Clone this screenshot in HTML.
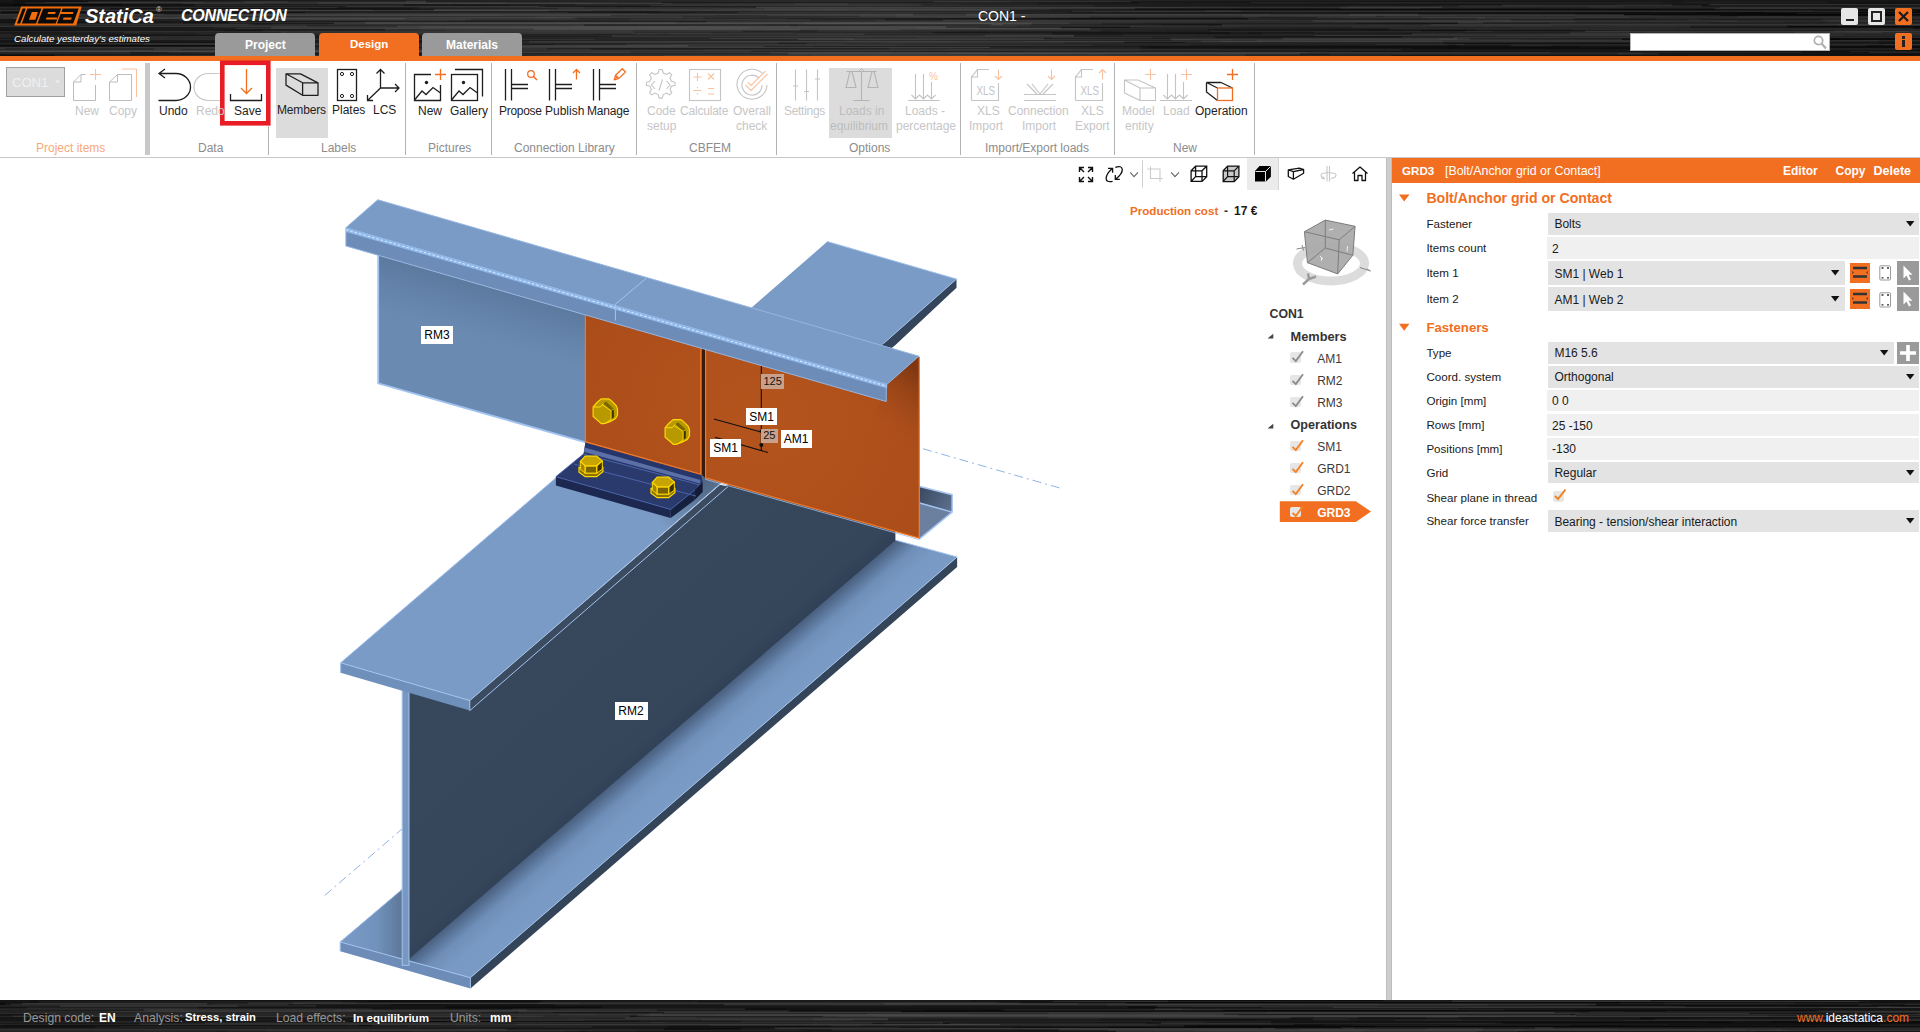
<!DOCTYPE html>
<html><head><meta charset="utf-8">
<style>
*{margin:0;padding:0;box-sizing:border-box}
html,body{width:1920px;height:1032px;overflow:hidden;background:#fff;font-family:"Liberation Sans",sans-serif;position:relative}
.a{position:absolute}
.hdr{left:0;top:0;width:1920px;height:56px;background:#262626;
 background-image:repeating-linear-gradient(180deg,rgba(255,255,255,0.05) 0px,rgba(0,0,0,0.25) 2px,rgba(255,255,255,0.07) 3px,rgba(0,0,0,0.15) 5px,rgba(255,255,255,0.03) 7px);}
.obar{left:0;top:56px;width:1920px;height:5px;background:#f26e21}
.rib{left:0;top:61px;width:1920px;height:96px;background:#fff}
.ribline{left:0;top:157px;width:1920px;height:1px;background:#c8c8c8}
.t{position:absolute;white-space:nowrap;font-size:13px;color:#1e1e1e;line-height:1}
.dis{color:#c6c6c6}
.grp{position:absolute;white-space:nowrap;font-size:13px;color:#8c8c8c;line-height:1}
.sep{position:absolute;width:1px;background:#c8c8c8}
.lbl{position:absolute;background:#fff;font-size:12px;line-height:1;color:#000;display:flex;align-items:center;justify-content:center;white-space:nowrap}
.lbl.tan{background:#c9a18a;font-size:11px;color:#111}
.status{left:0;top:1000px;width:1920px;height:32px;background:#1e1e1e;
 background-image:repeating-linear-gradient(180deg,rgba(255,255,255,0.05) 0px,rgba(0,0,0,0.25) 2px,rgba(255,255,255,0.07) 3px,rgba(0,0,0,0.15) 5px,rgba(255,255,255,0.03) 7px);}
</style></head><body>
<div class="a hdr"><svg class="a" style="left:0;top:0" width="1920" height="56"><rect width="1920" height="56" fill="#161616"/><rect x="943" y="25.3" width="843" height="1" fill="#4c4c4c" opacity="0.34"/><rect x="836" y="10.3" width="622" height="1.5" fill="#000" opacity="0.16"/><rect x="896" y="7.9" width="818" height="2" fill="#000" opacity="0.38"/><rect x="1152" y="54.0" width="612" height="1" fill="#4c4c4c" opacity="0.13"/><rect x="122" y="3.3" width="331" height="2" fill="#4c4c4c" opacity="0.32"/><rect x="134" y="33.1" width="325" height="1" fill="#4c4c4c" opacity="0.12"/><rect x="318" y="25.6" width="898" height="1.5" fill="#000" opacity="0.48"/><rect x="210" y="17.7" width="367" height="2" fill="#4c4c4c" opacity="0.45"/><rect x="346" y="6.0" width="200" height="1" fill="#4c4c4c" opacity="0.41"/><rect x="1721" y="11.7" width="502" height="1" fill="#000" opacity="0.29"/><rect x="141" y="31.7" width="656" height="1" fill="#4c4c4c" opacity="0.25"/><rect x="1383" y="54.0" width="238" height="1" fill="#4c4c4c" opacity="0.16"/><rect x="781" y="26.0" width="662" height="1" fill="#4c4c4c" opacity="0.34"/><rect x="552" y="23.5" width="446" height="1.5" fill="#000" opacity="0.12"/><rect x="-256" y="55.9" width="290" height="1" fill="#000" opacity="0.38"/><rect x="25" y="2.4" width="481" height="1.5" fill="#4c4c4c" opacity="0.38"/><rect x="-135" y="21.6" width="307" height="1.5" fill="#000" opacity="0.13"/><rect x="706" y="20.8" width="869" height="2" fill="#4c4c4c" opacity="0.37"/><rect x="42" y="10.2" width="831" height="1" fill="#000" opacity="0.23"/><rect x="1096" y="8.9" width="565" height="2" fill="#000" opacity="0.29"/><rect x="636" y="33.8" width="228" height="1" fill="#4c4c4c" opacity="0.53"/><rect x="569" y="41.4" width="466" height="1" fill="#000" opacity="0.33"/><rect x="1869" y="52.0" width="245" height="1" fill="#4c4c4c" opacity="0.40"/><rect x="1737" y="15.7" width="303" height="2" fill="#4c4c4c" opacity="0.24"/><rect x="-197" y="13.9" width="361" height="1" fill="#4c4c4c" opacity="0.54"/><rect x="1678" y="20.3" width="885" height="1" fill="#000" opacity="0.42"/><rect x="1750" y="33.0" width="506" height="1" fill="#4c4c4c" opacity="0.25"/><rect x="1112" y="1.2" width="512" height="1" fill="#000" opacity="0.26"/><rect x="912" y="4.2" width="703" height="1" fill="#000" opacity="0.44"/><rect x="1731" y="44.4" width="414" height="2" fill="#000" opacity="0.51"/><rect x="-233" y="52.9" width="525" height="2" fill="#4c4c4c" opacity="0.40"/><rect x="1052" y="32.6" width="210" height="2" fill="#000" opacity="0.55"/><rect x="562" y="40.8" width="701" height="1" fill="#4c4c4c" opacity="0.31"/><rect x="842" y="29.0" width="383" height="1" fill="#4c4c4c" opacity="0.13"/><rect x="1064" y="27.8" width="840" height="1.5" fill="#4c4c4c" opacity="0.12"/><rect x="1058" y="8.0" width="539" height="2" fill="#000" opacity="0.27"/><rect x="236" y="27.9" width="454" height="1" fill="#4c4c4c" opacity="0.39"/><rect x="553" y="49.3" width="587" height="2" fill="#4c4c4c" opacity="0.18"/><rect x="1688" y="19.6" width="180" height="1" fill="#4c4c4c" opacity="0.54"/><rect x="746" y="6.3" width="844" height="2" fill="#000" opacity="0.28"/><rect x="1290" y="37.6" width="781" height="1" fill="#000" opacity="0.26"/><rect x="1049" y="15.6" width="659" height="1" fill="#4c4c4c" opacity="0.27"/><rect x="600" y="35.9" width="292" height="1" fill="#000" opacity="0.23"/><rect x="1885" y="44.6" width="236" height="1.5" fill="#4c4c4c" opacity="0.35"/><rect x="1220" y="53.7" width="300" height="1" fill="#4c4c4c" opacity="0.20"/><rect x="887" y="42.3" width="177" height="1" fill="#4c4c4c" opacity="0.45"/><rect x="1458" y="22.0" width="830" height="2" fill="#4c4c4c" opacity="0.52"/><rect x="707" y="7.3" width="619" height="1.5" fill="#000" opacity="0.28"/><rect x="1146" y="26.0" width="304" height="1" fill="#000" opacity="0.47"/><rect x="1698" y="11.9" width="885" height="1.5" fill="#000" opacity="0.35"/><rect x="1295" y="14.7" width="162" height="1.5" fill="#4c4c4c" opacity="0.14"/><rect x="1405" y="30.8" width="516" height="1" fill="#4c4c4c" opacity="0.47"/><rect x="-222" y="24.0" width="550" height="2" fill="#000" opacity="0.51"/><rect x="847" y="8.3" width="693" height="2" fill="#000" opacity="0.42"/><rect x="1230" y="32.4" width="718" height="1" fill="#4c4c4c" opacity="0.36"/><rect x="1573" y="29.3" width="570" height="1" fill="#4c4c4c" opacity="0.28"/><rect x="13" y="17.0" width="559" height="2" fill="#4c4c4c" opacity="0.33"/><rect x="817" y="30.0" width="604" height="2" fill="#4c4c4c" opacity="0.54"/><rect x="1896" y="30.5" width="241" height="2" fill="#4c4c4c" opacity="0.19"/><rect x="1824" y="23.2" width="843" height="1" fill="#4c4c4c" opacity="0.32"/><rect x="1700" y="19.0" width="852" height="1" fill="#000" opacity="0.35"/><rect x="1072" y="10.7" width="844" height="1" fill="#4c4c4c" opacity="0.46"/><rect x="45" y="2.0" width="159" height="1" fill="#4c4c4c" opacity="0.43"/><rect x="-67" y="34.7" width="698" height="1.5" fill="#4c4c4c" opacity="0.34"/><rect x="1257" y="40.2" width="809" height="1" fill="#4c4c4c" opacity="0.39"/><rect x="1618" y="30.1" width="551" height="1" fill="#4c4c4c" opacity="0.21"/><rect x="1345" y="13.0" width="758" height="1.5" fill="#000" opacity="0.26"/><rect x="132" y="49.9" width="734" height="1" fill="#4c4c4c" opacity="0.16"/><rect x="-104" y="7.4" width="441" height="1" fill="#4c4c4c" opacity="0.52"/><rect x="1094" y="11.2" width="749" height="1.5" fill="#4c4c4c" opacity="0.37"/><rect x="1850" y="51.0" width="237" height="1" fill="#4c4c4c" opacity="0.45"/><rect x="770" y="45.0" width="168" height="2" fill="#000" opacity="0.38"/><rect x="110" y="8.2" width="303" height="1" fill="#000" opacity="0.55"/><rect x="-2" y="32.5" width="661" height="2" fill="#4c4c4c" opacity="0.16"/><rect x="844" y="26.1" width="473" height="1" fill="#000" opacity="0.13"/><rect x="102" y="47.3" width="490" height="1" fill="#000" opacity="0.29"/><rect x="-90" y="33.9" width="744" height="2" fill="#4c4c4c" opacity="0.16"/><rect x="124" y="31.9" width="588" height="1.5" fill="#4c4c4c" opacity="0.45"/><rect x="1353" y="51.0" width="733" height="1.5" fill="#000" opacity="0.29"/><rect x="1242" y="49.3" width="725" height="1" fill="#000" opacity="0.29"/><rect x="459" y="4.0" width="502" height="1" fill="#4c4c4c" opacity="0.27"/><rect x="1797" y="13.0" width="650" height="1" fill="#4c4c4c" opacity="0.40"/><rect x="565" y="29.9" width="900" height="2" fill="#000" opacity="0.42"/><rect x="-249" y="54.9" width="612" height="2" fill="#000" opacity="0.23"/><rect x="1390" y="28.3" width="636" height="1.5" fill="#4c4c4c" opacity="0.23"/><rect x="921" y="50.7" width="531" height="1" fill="#000" opacity="0.36"/><rect x="1497" y="35.7" width="207" height="1" fill="#4c4c4c" opacity="0.45"/><rect x="1784" y="21.6" width="439" height="1" fill="#000" opacity="0.49"/><rect x="798" y="24.1" width="363" height="1.5" fill="#4c4c4c" opacity="0.25"/><rect x="299" y="27.1" width="847" height="1" fill="#000" opacity="0.44"/><rect x="244" y="0.8" width="182" height="2" fill="#4c4c4c" opacity="0.44"/><rect x="400" y="3.0" width="448" height="1.5" fill="#4c4c4c" opacity="0.43"/><rect x="1710" y="4.1" width="472" height="1" fill="#4c4c4c" opacity="0.54"/><rect x="-81" y="2.5" width="758" height="1" fill="#000" opacity="0.18"/><rect x="-44" y="33.8" width="618" height="1" fill="#4c4c4c" opacity="0.21"/><rect x="43" y="20.0" width="422" height="1.5" fill="#4c4c4c" opacity="0.30"/><rect x="1214" y="35.8" width="423" height="1" fill="#000" opacity="0.47"/><rect x="1330" y="53.3" width="329" height="1.5" fill="#4c4c4c" opacity="0.50"/><rect x="1054" y="15.4" width="694" height="1.5" fill="#000" opacity="0.20"/><rect x="121" y="42.2" width="337" height="1" fill="#000" opacity="0.51"/><rect x="-279" y="35.2" width="345" height="1" fill="#4c4c4c" opacity="0.14"/><rect x="-139" y="30.3" width="215" height="1.5" fill="#000" opacity="0.36"/><rect x="486" y="27.1" width="404" height="1" fill="#4c4c4c" opacity="0.18"/><rect x="693" y="44.9" width="767" height="2" fill="#000" opacity="0.45"/><rect x="273" y="23.8" width="757" height="1.5" fill="#4c4c4c" opacity="0.40"/><rect x="1385" y="16.3" width="770" height="1" fill="#4c4c4c" opacity="0.40"/><rect x="420" y="25.9" width="558" height="2" fill="#4c4c4c" opacity="0.36"/><rect x="1422" y="16.7" width="207" height="1" fill="#4c4c4c" opacity="0.40"/><rect x="798" y="38.9" width="723" height="1" fill="#4c4c4c" opacity="0.50"/><rect x="1312" y="20.0" width="425" height="1.5" fill="#4c4c4c" opacity="0.42"/><rect x="1483" y="24.5" width="379" height="1" fill="#4c4c4c" opacity="0.29"/><rect x="1539" y="4.7" width="168" height="1" fill="#000" opacity="0.37"/><rect x="518" y="41.4" width="443" height="1" fill="#4c4c4c" opacity="0.37"/><rect x="1385" y="9.9" width="811" height="1" fill="#4c4c4c" opacity="0.13"/><rect x="960" y="30.5" width="875" height="1" fill="#000" opacity="0.47"/><rect x="378" y="32.6" width="559" height="1" fill="#4c4c4c" opacity="0.24"/><rect x="-112" y="50.3" width="626" height="2" fill="#4c4c4c" opacity="0.44"/><rect x="189" y="13.7" width="724" height="2" fill="#4c4c4c" opacity="0.45"/><rect x="1492" y="19.6" width="400" height="1" fill="#4c4c4c" opacity="0.33"/><rect x="1731" y="39.7" width="458" height="1" fill="#000" opacity="0.41"/><rect x="1551" y="45.1" width="816" height="1.5" fill="#000" opacity="0.40"/><rect x="1481" y="39.8" width="466" height="1" fill="#4c4c4c" opacity="0.18"/><rect x="534" y="55.5" width="276" height="1.5" fill="#4c4c4c" opacity="0.30"/><rect x="1667" y="15.3" width="504" height="1" fill="#000" opacity="0.25"/><rect x="98" y="43.5" width="197" height="1" fill="#4c4c4c" opacity="0.37"/><rect x="139" y="17.5" width="419" height="2" fill="#4c4c4c" opacity="0.38"/><rect x="197" y="33.3" width="289" height="1.5" fill="#4c4c4c" opacity="0.19"/><rect x="1791" y="35.1" width="563" height="2" fill="#000" opacity="0.33"/><rect x="459" y="51.2" width="561" height="1" fill="#000" opacity="0.33"/><rect x="183" y="22.4" width="251" height="1.5" fill="#000" opacity="0.54"/><rect x="-171" y="44.1" width="843" height="1.5" fill="#000" opacity="0.50"/><rect x="247" y="25.2" width="466" height="1.5" fill="#000" opacity="0.30"/><rect x="1716" y="8.1" width="758" height="1.5" fill="#4c4c4c" opacity="0.44"/><rect x="-182" y="28.9" width="579" height="1" fill="#4c4c4c" opacity="0.21"/><rect x="-117" y="46.0" width="352" height="2" fill="#000" opacity="0.16"/><rect x="-116" y="38.8" width="711" height="1" fill="#4c4c4c" opacity="0.34"/><rect x="626" y="44.2" width="838" height="1" fill="#4c4c4c" opacity="0.48"/><rect x="617" y="2.1" width="521" height="1.5" fill="#000" opacity="0.53"/><rect x="-131" y="17.4" width="379" height="1.5" fill="#4c4c4c" opacity="0.43"/><rect x="12" y="4.2" width="651" height="1" fill="#000" opacity="0.44"/><rect x="-273" y="36.6" width="433" height="1" fill="#000" opacity="0.22"/><rect x="-277" y="25.7" width="894" height="1" fill="#000" opacity="0.21"/><rect x="535" y="16.3" width="555" height="2" fill="#4c4c4c" opacity="0.27"/><rect x="-107" y="31.1" width="291" height="1.5" fill="#4c4c4c" opacity="0.17"/><rect x="949" y="52.9" width="693" height="1" fill="#4c4c4c" opacity="0.48"/><rect x="1080" y="5.7" width="249" height="1" fill="#000" opacity="0.20"/><rect x="1558" y="22.5" width="595" height="1" fill="#4c4c4c" opacity="0.22"/><rect x="663" y="55.3" width="728" height="1" fill="#4c4c4c" opacity="0.47"/><rect x="1402" y="36.2" width="766" height="2" fill="#4c4c4c" opacity="0.26"/><rect x="1314" y="34.9" width="610" height="1" fill="#4c4c4c" opacity="0.46"/><rect x="1051" y="37.0" width="164" height="2" fill="#4c4c4c" opacity="0.27"/><rect x="538" y="6.0" width="532" height="1" fill="#000" opacity="0.47"/><rect x="896" y="14.2" width="374" height="1" fill="#4c4c4c" opacity="0.38"/><rect x="140" y="32.2" width="850" height="1" fill="#000" opacity="0.42"/><rect x="-241" y="31.8" width="645" height="2" fill="#000" opacity="0.18"/><rect x="1248" y="32.3" width="397" height="2" fill="#000" opacity="0.28"/><rect x="704" y="49.4" width="697" height="1" fill="#4c4c4c" opacity="0.36"/><rect x="287" y="31.4" width="832" height="1" fill="#000" opacity="0.47"/><rect x="1531" y="6.9" width="366" height="1.5" fill="#000" opacity="0.22"/><rect x="112" y="46.5" width="561" height="1" fill="#4c4c4c" opacity="0.13"/><rect x="1764" y="43.8" width="899" height="2" fill="#4c4c4c" opacity="0.45"/><rect x="1122" y="34.5" width="722" height="1" fill="#4c4c4c" opacity="0.30"/><rect x="558" y="8.0" width="577" height="1.5" fill="#4c4c4c" opacity="0.34"/><rect x="1768" y="13.7" width="190" height="1" fill="#000" opacity="0.43"/><rect x="805" y="22.6" width="227" height="2" fill="#4c4c4c" opacity="0.51"/><rect x="778" y="42.1" width="896" height="2" fill="#000" opacity="0.49"/><rect x="-39" y="46.2" width="236" height="2" fill="#000" opacity="0.26"/><rect x="-246" y="23.5" width="830" height="2" fill="#4c4c4c" opacity="0.38"/><rect x="1026" y="41.0" width="714" height="1" fill="#4c4c4c" opacity="0.38"/><rect x="1575" y="13.7" width="332" height="2" fill="#000" opacity="0.54"/><rect x="868" y="38.9" width="329" height="1" fill="#4c4c4c" opacity="0.29"/><rect x="1918" y="49.3" width="698" height="2" fill="#000" opacity="0.28"/><rect x="64" y="31.6" width="637" height="1" fill="#4c4c4c" opacity="0.17"/><rect x="1459" y="5.5" width="243" height="1" fill="#4c4c4c" opacity="0.53"/><rect x="1317" y="16.6" width="168" height="2" fill="#4c4c4c" opacity="0.31"/><rect x="582" y="45.7" width="417" height="1" fill="#4c4c4c" opacity="0.14"/><rect x="397" y="25.5" width="393" height="2" fill="#4c4c4c" opacity="0.45"/><rect x="150" y="49.2" width="794" height="1.5" fill="#000" opacity="0.15"/><rect x="486" y="46.9" width="504" height="1" fill="#4c4c4c" opacity="0.50"/><rect x="224" y="29.9" width="862" height="1.5" fill="#000" opacity="0.40"/><rect x="395" y="40.6" width="825" height="1" fill="#000" opacity="0.43"/><rect x="1824" y="18.8" width="734" height="1.5" fill="#4c4c4c" opacity="0.19"/><rect x="1234" y="6.8" width="352" height="1.5" fill="#000" opacity="0.34"/><rect x="527" y="44.3" width="647" height="1" fill="#000" opacity="0.37"/><rect x="1688" y="54.7" width="285" height="1" fill="#4c4c4c" opacity="0.18"/><rect x="-131" y="25.9" width="838" height="1" fill="#4c4c4c" opacity="0.51"/><rect x="332" y="33.6" width="338" height="1.5" fill="#000" opacity="0.16"/><rect x="121" y="55.3" width="284" height="1" fill="#000" opacity="0.13"/><rect x="-225" y="55.3" width="496" height="2" fill="#000" opacity="0.29"/><rect x="-158" y="3.4" width="733" height="2" fill="#000" opacity="0.26"/><rect x="847" y="43.8" width="529" height="1" fill="#000" opacity="0.41"/><rect x="1412" y="33.3" width="234" height="1.5" fill="#4c4c4c" opacity="0.41"/><rect x="1456" y="44.0" width="327" height="2" fill="#4c4c4c" opacity="0.22"/><rect x="150" y="14.6" width="878" height="1" fill="#4c4c4c" opacity="0.31"/><rect x="1050" y="18.2" width="606" height="1.5" fill="#000" opacity="0.34"/><rect x="-231" y="48.0" width="236" height="1" fill="#4c4c4c" opacity="0.40"/><rect x="-180" y="34.9" width="469" height="1.5" fill="#000" opacity="0.47"/><rect x="806" y="42.9" width="638" height="1" fill="#4c4c4c" opacity="0.28"/><rect x="1233" y="8.9" width="773" height="2" fill="#000" opacity="0.15"/><rect x="1251" y="26.1" width="678" height="1" fill="#000" opacity="0.18"/><rect x="711" y="8.1" width="709" height="1" fill="#4c4c4c" opacity="0.22"/><rect x="935" y="5.1" width="504" height="1" fill="#000" opacity="0.54"/><rect x="-36" y="16.6" width="792" height="1" fill="#4c4c4c" opacity="0.16"/><rect x="448" y="20.4" width="886" height="2" fill="#000" opacity="0.14"/><rect x="1908" y="32.8" width="703" height="1" fill="#4c4c4c" opacity="0.51"/><rect x="572" y="25.9" width="782" height="1" fill="#4c4c4c" opacity="0.46"/><rect x="247" y="23.4" width="745" height="2" fill="#000" opacity="0.33"/><rect x="738" y="12.0" width="381" height="1" fill="#4c4c4c" opacity="0.55"/><rect x="154" y="48.3" width="437" height="1.5" fill="#4c4c4c" opacity="0.42"/><rect x="1079" y="53.1" width="539" height="1" fill="#000" opacity="0.34"/><rect x="502" y="15.0" width="265" height="1" fill="#000" opacity="0.27"/><rect x="1714" y="40.5" width="165" height="1" fill="#4c4c4c" opacity="0.29"/><rect x="547" y="47.9" width="342" height="1.5" fill="#000" opacity="0.41"/><rect x="229" y="22.1" width="181" height="1" fill="#4c4c4c" opacity="0.38"/><rect x="612" y="11.7" width="509" height="1.5" fill="#000" opacity="0.34"/><rect x="703" y="17.6" width="433" height="2" fill="#000" opacity="0.48"/><rect x="558" y="22.7" width="799" height="1.5" fill="#4c4c4c" opacity="0.25"/><rect x="11" y="34.2" width="786" height="1" fill="#000" opacity="0.33"/><rect x="1866" y="45.3" width="374" height="1" fill="#000" opacity="0.52"/><rect x="484" y="31.3" width="242" height="1.5" fill="#000" opacity="0.28"/><rect x="650" y="5.0" width="444" height="1.5" fill="#4c4c4c" opacity="0.28"/><rect x="1261" y="15.9" width="316" height="1" fill="#000" opacity="0.21"/><rect x="1281" y="19.6" width="540" height="1" fill="#000" opacity="0.51"/><rect x="271" y="26.8" width="790" height="2" fill="#4c4c4c" opacity="0.51"/><rect x="1720" y="6.7" width="834" height="1.5" fill="#4c4c4c" opacity="0.28"/><rect x="423" y="26.3" width="340" height="1.5" fill="#4c4c4c" opacity="0.27"/><rect x="281" y="31.7" width="651" height="1.5" fill="#4c4c4c" opacity="0.32"/><rect x="505" y="53.5" width="582" height="1" fill="#000" opacity="0.45"/><rect x="612" y="34.8" width="462" height="2" fill="#4c4c4c" opacity="0.48"/><rect x="1719" y="21.4" width="179" height="1.5" fill="#4c4c4c" opacity="0.34"/><rect x="750" y="27.7" width="166" height="1.5" fill="#000" opacity="0.24"/><rect x="221" y="38.1" width="151" height="1" fill="#4c4c4c" opacity="0.29"/><rect x="1585" y="30.6" width="724" height="1.5" fill="#4c4c4c" opacity="0.47"/><rect x="-69" y="14.8" width="165" height="2" fill="#000" opacity="0.21"/><rect x="1840" y="38.4" width="768" height="2" fill="#4c4c4c" opacity="0.39"/><rect x="352" y="45.1" width="461" height="2" fill="#4c4c4c" opacity="0.41"/><rect x="253" y="13.3" width="394" height="1" fill="#4c4c4c" opacity="0.34"/><rect x="1896" y="49.1" width="763" height="2" fill="#000" opacity="0.25"/><rect x="1208" y="28.7" width="180" height="2" fill="#000" opacity="0.30"/><rect x="264" y="3.0" width="531" height="1.5" fill="#000" opacity="0.29"/><rect x="1216" y="20.6" width="288" height="1" fill="#000" opacity="0.21"/><rect x="634" y="31.8" width="680" height="1" fill="#000" opacity="0.48"/><rect x="537" y="7.0" width="652" height="1" fill="#4c4c4c" opacity="0.20"/><rect x="1240" y="26.4" width="743" height="1.5" fill="#000" opacity="0.24"/><rect x="1102" y="23.5" width="448" height="1" fill="#000" opacity="0.55"/><rect x="1914" y="8.8" width="803" height="1" fill="#4c4c4c" opacity="0.27"/><rect x="1709" y="22.7" width="775" height="1" fill="#000" opacity="0.19"/><rect x="1477" y="17.3" width="779" height="2" fill="#4c4c4c" opacity="0.29"/><rect x="1878" y="42.9" width="442" height="1" fill="#000" opacity="0.35"/><rect x="1551" y="24.8" width="567" height="2" fill="#000" opacity="0.50"/><rect x="419" y="6.7" width="164" height="2" fill="#4c4c4c" opacity="0.18"/><rect x="205" y="15.3" width="512" height="1" fill="#4c4c4c" opacity="0.23"/><rect x="-284" y="8.5" width="720" height="1.5" fill="#000" opacity="0.12"/><rect x="1914" y="27.1" width="302" height="2" fill="#000" opacity="0.33"/><rect x="943" y="19.7" width="568" height="1.5" fill="#4c4c4c" opacity="0.39"/><rect x="1784" y="15.5" width="798" height="1" fill="#000" opacity="0.31"/><rect x="-241" y="9.8" width="277" height="1.5" fill="#4c4c4c" opacity="0.15"/><rect x="934" y="1.3" width="197" height="1" fill="#4c4c4c" opacity="0.50"/><rect x="-276" y="53.7" width="545" height="2" fill="#000" opacity="0.46"/><rect x="1483" y="22.4" width="771" height="1" fill="#000" opacity="0.54"/><rect x="770" y="52.4" width="780" height="1" fill="#4c4c4c" opacity="0.51"/><rect x="13" y="0.5" width="393" height="1.5" fill="#000" opacity="0.34"/><rect x="510" y="45.4" width="629" height="1.5" fill="#4c4c4c" opacity="0.24"/><rect x="287" y="33.3" width="310" height="1" fill="#4c4c4c" opacity="0.14"/><rect x="1210" y="30.6" width="283" height="1.5" fill="#4c4c4c" opacity="0.18"/><rect x="-251" y="10.2" width="450" height="1" fill="#4c4c4c" opacity="0.16"/><rect x="88" y="1.2" width="200" height="1.5" fill="#4c4c4c" opacity="0.37"/><rect x="1837" y="24.1" width="315" height="1" fill="#4c4c4c" opacity="0.42"/><rect x="-145" y="45.5" width="443" height="1.5" fill="#000" opacity="0.50"/><rect x="-278" y="29.4" width="698" height="1" fill="#000" opacity="0.51"/><rect x="1068" y="11.9" width="816" height="1" fill="#000" opacity="0.39"/><rect x="1340" y="6.8" width="708" height="2" fill="#4c4c4c" opacity="0.32"/><rect x="534" y="28.1" width="556" height="2" fill="#4c4c4c" opacity="0.52"/><rect x="1017" y="25.0" width="596" height="2" fill="#000" opacity="0.19"/><rect x="268" y="18.4" width="617" height="2" fill="#4c4c4c" opacity="0.32"/><rect x="1849" y="2.9" width="715" height="1" fill="#000" opacity="0.17"/><rect x="1141" y="47.1" width="853" height="1.5" fill="#000" opacity="0.46"/><rect x="-156" y="55.6" width="803" height="1.5" fill="#000" opacity="0.23"/><rect x="891" y="25.4" width="799" height="1" fill="#4c4c4c" opacity="0.24"/><rect x="932" y="4.1" width="740" height="2" fill="#4c4c4c" opacity="0.22"/><rect x="1411" y="47.9" width="562" height="1" fill="#000" opacity="0.46"/><rect x="96" y="45.5" width="400" height="1" fill="#000" opacity="0.53"/><rect x="-39" y="46.7" width="286" height="2" fill="#4c4c4c" opacity="0.49"/><rect x="-140" y="50.5" width="891" height="1" fill="#4c4c4c" opacity="0.39"/><rect x="1908" y="31.4" width="434" height="1.5" fill="#000" opacity="0.42"/><rect x="163" y="36.9" width="307" height="2" fill="#000" opacity="0.19"/><rect x="318" y="2.3" width="344" height="1.5" fill="#4c4c4c" opacity="0.39"/><rect x="1909" y="11.0" width="669" height="1.5" fill="#000" opacity="0.27"/><rect x="144" y="43.1" width="204" height="2" fill="#4c4c4c" opacity="0.28"/><rect x="-3" y="15.6" width="243" height="2" fill="#4c4c4c" opacity="0.34"/><rect x="986" y="13.2" width="364" height="1" fill="#000" opacity="0.24"/><rect x="710" y="37.9" width="850" height="1" fill="#4c4c4c" opacity="0.44"/><rect x="-157" y="25.1" width="464" height="1.5" fill="#4c4c4c" opacity="0.31"/><rect x="1243" y="16.4" width="654" height="1" fill="#4c4c4c" opacity="0.30"/><rect x="1623" y="33.2" width="441" height="1" fill="#4c4c4c" opacity="0.16"/><rect x="-79" y="30.6" width="822" height="1.5" fill="#4c4c4c" opacity="0.28"/><rect x="1010" y="1.7" width="673" height="1" fill="#000" opacity="0.47"/><rect x="46" y="37.4" width="204" height="2" fill="#4c4c4c" opacity="0.34"/><rect x="1044" y="37.6" width="878" height="2" fill="#000" opacity="0.55"/><rect x="210" y="24.3" width="556" height="2" fill="#4c4c4c" opacity="0.14"/><rect x="1454" y="36.7" width="849" height="2" fill="#4c4c4c" opacity="0.37"/><rect x="17" y="20.7" width="446" height="1" fill="#000" opacity="0.16"/><rect x="1245" y="53.7" width="740" height="2" fill="#000" opacity="0.41"/><rect x="-34" y="43.5" width="501" height="1" fill="#4c4c4c" opacity="0.49"/><rect x="617" y="6.1" width="571" height="1" fill="#000" opacity="0.45"/><rect x="826" y="16.9" width="243" height="1" fill="#4c4c4c" opacity="0.18"/><rect x="385" y="28.5" width="415" height="2" fill="#4c4c4c" opacity="0.37"/><rect x="183" y="3.0" width="489" height="1" fill="#4c4c4c" opacity="0.32"/><rect x="818" y="45.3" width="258" height="1" fill="#4c4c4c" opacity="0.19"/><rect x="-276" y="23.1" width="265" height="2" fill="#000" opacity="0.44"/><rect x="879" y="8.8" width="171" height="1" fill="#4c4c4c" opacity="0.25"/><rect x="365" y="21.8" width="311" height="2" fill="#4c4c4c" opacity="0.40"/><rect x="786" y="18.4" width="641" height="1" fill="#000" opacity="0.53"/><rect x="365" y="22.1" width="704" height="2" fill="#4c4c4c" opacity="0.28"/><rect x="554" y="44.3" width="637" height="1.5" fill="#4c4c4c" opacity="0.17"/><rect x="-163" y="46.8" width="546" height="1" fill="#4c4c4c" opacity="0.29"/><rect x="1283" y="37.8" width="174" height="2" fill="#4c4c4c" opacity="0.53"/><rect x="529" y="41.1" width="595" height="1.5" fill="#4c4c4c" opacity="0.42"/><rect x="512" y="53.8" width="599" height="1" fill="#4c4c4c" opacity="0.25"/><rect x="805" y="17.6" width="537" height="1" fill="#000" opacity="0.14"/><rect x="1009" y="11.9" width="756" height="1.5" fill="#000" opacity="0.40"/><rect x="334" y="22.5" width="660" height="1.5" fill="#4c4c4c" opacity="0.54"/><rect x="405" y="18.4" width="765" height="1" fill="#000" opacity="0.40"/><rect x="789" y="56.0" width="446" height="1.5" fill="#4c4c4c" opacity="0.18"/><rect x="-250" y="35.8" width="851" height="1" fill="#000" opacity="0.37"/><rect x="764" y="46.1" width="402" height="1" fill="#000" opacity="0.51"/><rect x="-115" y="9.7" width="664" height="2" fill="#4c4c4c" opacity="0.45"/><rect x="688" y="44.9" width="823" height="1.5" fill="#000" opacity="0.48"/><rect x="917" y="37.3" width="235" height="1" fill="#4c4c4c" opacity="0.25"/><rect x="169" y="51.6" width="461" height="1" fill="#4c4c4c" opacity="0.48"/><rect x="308" y="8.7" width="456" height="1" fill="#000" opacity="0.52"/><rect x="1761" y="37.8" width="520" height="2" fill="#000" opacity="0.29"/><rect x="1348" y="5.9" width="275" height="1.5" fill="#4c4c4c" opacity="0.21"/><rect x="1146" y="46.1" width="433" height="2" fill="#000" opacity="0.41"/><rect x="1570" y="32.2" width="419" height="2" fill="#4c4c4c" opacity="0.33"/><rect x="1248" y="18.4" width="325" height="1" fill="#4c4c4c" opacity="0.43"/><rect x="-158" y="14.4" width="769" height="2" fill="#4c4c4c" opacity="0.43"/><rect x="-155" y="50.9" width="285" height="2" fill="#4c4c4c" opacity="0.35"/><rect x="214" y="27.3" width="715" height="1" fill="#4c4c4c" opacity="0.25"/><rect x="1251" y="2.0" width="576" height="1" fill="#4c4c4c" opacity="0.26"/><rect x="1855" y="25.0" width="418" height="1" fill="#4c4c4c" opacity="0.23"/><rect x="142" y="12.2" width="551" height="1" fill="#000" opacity="0.17"/><rect x="1697" y="32.6" width="843" height="1.5" fill="#000" opacity="0.28"/><rect x="1544" y="34.1" width="886" height="1" fill="#4c4c4c" opacity="0.27"/><rect x="263" y="30.1" width="370" height="2" fill="#4c4c4c" opacity="0.18"/><rect x="-236" y="4.2" width="745" height="2" fill="#000" opacity="0.19"/><rect x="1608" y="9.0" width="791" height="1" fill="#000" opacity="0.35"/><rect x="1165" y="29.9" width="839" height="1" fill="#000" opacity="0.23"/><rect x="1431" y="23.9" width="639" height="1.5" fill="#4c4c4c" opacity="0.33"/><rect x="180" y="19.4" width="630" height="1" fill="#4c4c4c" opacity="0.43"/><rect x="921" y="4.2" width="581" height="1.5" fill="#000" opacity="0.44"/><rect x="-74" y="50.5" width="574" height="1.5" fill="#4c4c4c" opacity="0.55"/><rect x="13" y="19.8" width="862" height="2" fill="#000" opacity="0.18"/><rect x="1882" y="32.0" width="664" height="1" fill="#000" opacity="0.46"/><rect x="1208" y="24.5" width="215" height="1" fill="#000" opacity="0.38"/><rect x="-74" y="49.3" width="255" height="1" fill="#4c4c4c" opacity="0.42"/><rect x="1859" y="31.2" width="571" height="1.5" fill="#4c4c4c" opacity="0.25"/><rect x="305" y="12.3" width="263" height="1" fill="#4c4c4c" opacity="0.50"/><rect x="1776" y="48.1" width="165" height="1.5" fill="#4c4c4c" opacity="0.37"/><rect x="-108" y="52.3" width="539" height="1" fill="#000" opacity="0.13"/><rect x="368" y="16.7" width="890" height="1" fill="#4c4c4c" opacity="0.18"/><rect x="854" y="38.6" width="585" height="1" fill="#000" opacity="0.47"/><rect x="1827" y="20.8" width="312" height="1.5" fill="#4c4c4c" opacity="0.22"/><rect x="470" y="18.8" width="161" height="1.5" fill="#000" opacity="0.23"/><rect x="445" y="29.5" width="656" height="2" fill="#4c4c4c" opacity="0.22"/><rect x="33" y="9.8" width="340" height="1.5" fill="#4c4c4c" opacity="0.46"/><rect x="1205" y="10.4" width="608" height="1" fill="#4c4c4c" opacity="0.37"/><rect x="216" y="10.3" width="376" height="1" fill="#4c4c4c" opacity="0.43"/><rect x="899" y="44.3" width="209" height="1" fill="#000" opacity="0.23"/><rect x="937" y="2.5" width="254" height="1" fill="#000" opacity="0.15"/><rect x="560" y="55.5" width="252" height="1.5" fill="#000" opacity="0.46"/><rect x="159" y="55.6" width="830" height="1" fill="#4c4c4c" opacity="0.53"/><rect x="1517" y="26.6" width="160" height="1" fill="#4c4c4c" opacity="0.28"/><rect x="52" y="23.8" width="201" height="1" fill="#4c4c4c" opacity="0.33"/><rect x="459" y="52.2" width="848" height="1" fill="#4c4c4c" opacity="0.43"/><rect x="1" y="10.8" width="659" height="2" fill="#000" opacity="0.43"/><rect x="1314" y="20.6" width="843" height="1" fill="#4c4c4c" opacity="0.49"/><rect x="1201" y="40.6" width="242" height="1.5" fill="#4c4c4c" opacity="0.37"/><rect x="900" y="29.5" width="576" height="1" fill="#000" opacity="0.35"/><rect x="195" y="4.6" width="208" height="1" fill="#4c4c4c" opacity="0.45"/><rect x="434" y="9.0" width="576" height="2" fill="#4c4c4c" opacity="0.46"/><rect x="1914" y="19.6" width="516" height="2" fill="#4c4c4c" opacity="0.18"/><rect x="-246" y="54.8" width="722" height="1" fill="#4c4c4c" opacity="0.14"/><rect x="591" y="2.5" width="767" height="2" fill="#000" opacity="0.13"/><rect x="808" y="44.8" width="640" height="1" fill="#4c4c4c" opacity="0.20"/><rect x="1858" y="9.3" width="402" height="2" fill="#000" opacity="0.36"/><rect x="1349" y="14.0" width="275" height="2" fill="#4c4c4c" opacity="0.37"/><rect x="1003" y="24.1" width="342" height="1" fill="#000" opacity="0.33"/><rect x="946" y="26.2" width="840" height="1.5" fill="#000" opacity="0.52"/><rect x="996" y="13.2" width="268" height="1" fill="#000" opacity="0.24"/><rect x="-293" y="35.5" width="510" height="2" fill="#4c4c4c" opacity="0.44"/><rect x="1171" y="38.4" width="451" height="2" fill="#4c4c4c" opacity="0.48"/><rect x="409" y="3.2" width="629" height="1" fill="#4c4c4c" opacity="0.18"/><rect x="683" y="15.7" width="213" height="2" fill="#000" opacity="0.22"/><rect x="265" y="44.7" width="827" height="1" fill="#4c4c4c" opacity="0.30"/><rect x="788" y="53.0" width="512" height="1.5" fill="#4c4c4c" opacity="0.48"/><rect x="1135" y="51.9" width="667" height="1" fill="#4c4c4c" opacity="0.25"/><rect x="1470" y="38.4" width="684" height="1" fill="#000" opacity="0.46"/><rect x="756" y="6.6" width="686" height="1.5" fill="#4c4c4c" opacity="0.47"/><rect x="1130" y="26.4" width="657" height="1" fill="#4c4c4c" opacity="0.52"/><rect x="55" y="54.7" width="345" height="1.5" fill="#4c4c4c" opacity="0.29"/><rect x="1241" y="10.4" width="719" height="1" fill="#000" opacity="0.39"/><rect x="1185" y="41.9" width="477" height="1" fill="#4c4c4c" opacity="0.29"/><rect x="1794" y="31.9" width="629" height="1.5" fill="#4c4c4c" opacity="0.29"/><rect x="1662" y="2.2" width="525" height="1" fill="#000" opacity="0.22"/><rect x="845" y="38.9" width="387" height="1.5" fill="#4c4c4c" opacity="0.20"/><rect x="1792" y="38.4" width="398" height="1.5" fill="#000" opacity="0.51"/><rect x="989" y="29.8" width="377" height="1" fill="#4c4c4c" opacity="0.14"/><rect x="860" y="15.6" width="516" height="1" fill="#4c4c4c" opacity="0.49"/><rect x="1353" y="26.5" width="337" height="1" fill="#4c4c4c" opacity="0.37"/><rect x="584" y="24.3" width="405" height="2" fill="#000" opacity="0.25"/><rect x="1743" y="12.1" width="742" height="2" fill="#000" opacity="0.15"/><rect x="1222" y="24.2" width="722" height="1.5" fill="#4c4c4c" opacity="0.40"/><rect x="632" y="32.8" width="159" height="1" fill="#4c4c4c" opacity="0.20"/><rect x="108" y="34.5" width="877" height="1.5" fill="#000" opacity="0.37"/><rect x="1470" y="15.0" width="181" height="1" fill="#4c4c4c" opacity="0.15"/><rect x="130" y="53.3" width="339" height="1" fill="#000" opacity="0.36"/><rect x="1242" y="15.1" width="478" height="1" fill="#4c4c4c" opacity="0.30"/><rect x="1142" y="22.6" width="661" height="1" fill="#000" opacity="0.14"/><rect x="966" y="13.7" width="452" height="2" fill="#4c4c4c" opacity="0.44"/><defs><linearGradient id="hglow" x1="0" y1="0" x2="1" y2="0"><stop offset="0" stop-color="#fff" stop-opacity="0"/><stop offset="0.25" stop-color="#fff" stop-opacity="0.05"/><stop offset="0.45" stop-color="#fff" stop-opacity="0.09"/><stop offset="0.65" stop-color="#fff" stop-opacity="0.04"/><stop offset="1" stop-color="#fff" stop-opacity="0"/></linearGradient></defs><rect width="1920" height="56" fill="url(#hglow)"/></svg></div>
<div class="a obar"></div>
<svg class="a" style="left:0;top:0" width="170" height="50">
<polygon points="21.2,6.5 81.7,6.5 76.2,25.5 14.2,25.5" fill="#f26e0a"/>
<polygon points="22.6,8.4 25.8,8.4 20.2,23.6 17.0,23.6" fill="#0a0a0a"/>
<polygon points="27.4,8.4 41.5,8.4 36.0,23.6 21.8,23.6" fill="#0a0a0a"/>
<polygon points="31.9,12 37.9,12 35.4,19.7 29.0,19.7" fill="#f26e0a"/>
<polygon points="43.2,8.4 61.2,8.4 55.7,23.6 37.5,23.6" fill="#0a0a0a"/>
<polygon points="48.2,12 55.8,12 55,14 47.5,14" fill="#f26e0a"/>
<polygon points="46.5,17.6 57.5,17.6 56.8,19.5 45.8,19.5" fill="#f26e0a"/>
<polygon points="62.6,8.4 78.7,8.4 73.2,23.6 57.0,23.6" fill="#0a0a0a"/>
<polygon points="60.8,12 73.5,12 72.8,14 60,14" fill="#f26e0a"/>
<polygon points="63.6,17.6 71.8,17.6 71.1,19.7 62.9,19.7" fill="#f26e0a"/>
</svg>
<div class="t" style="left:85px;top:6px;font-size:20px;font-weight:bold;font-style:italic;color:#fff">StatiCa</div>
<div class="t" style="left:156px;top:6px;font-size:8px;color:#ddd">&#174;</div>
<div class="t" style="left:14px;top:34px;font-size:9.7px;font-style:italic;color:#fff">Calculate yesterday's estimates</div>
<div class="t" style="left:181px;top:8px;font-size:16px;font-style:italic;font-weight:bold;color:#fff;letter-spacing:-0.2px">CONNECTION</div>
<div class="a" style="left:215px;top:33px;width:100px;height:23px;background:#9a9a9a;border-radius:4px 4px 0 0"></div>
<div class="a" style="left:319px;top:33px;width:100px;height:23px;background:#f26e21;border-radius:4px 4px 0 0"></div>
<div class="a" style="left:422px;top:33px;width:100px;height:23px;background:#9a9a9a;border-radius:4px 4px 0 0"></div>
<div class="t" style="left:245px;top:39px;font-size:12px;font-weight:bold;color:#fff">Project</div>
<div class="t" style="left:350px;top:39px;font-size:11.5px;font-weight:bold;color:#fff">Design</div>
<div class="t" style="left:446px;top:39px;font-size:12px;font-weight:bold;color:#fff">Materials</div>
<div class="t" style="left:978px;top:9px;font-size:14px;color:#fff">CON1 -</div>
<div class="a" style="left:1841px;top:8px;width:17px;height:17px;background:#e6e6e6;border-radius:2px"></div>
<div class="a" style="left:1846px;top:19px;width:8px;height:2px;background:#222"></div>
<div class="a" style="left:1868px;top:8px;width:17px;height:17px;background:#e6e6e6;border-radius:2px"></div>
<div class="a" style="left:1871px;top:11px;width:11px;height:11px;border:2px solid #222"></div>
<div class="a" style="left:1895px;top:8px;width:17px;height:17px;background:#f26e21;border-radius:2px"></div>
<svg class="a" style="left:1895px;top:8px" width="17" height="17"><path d="M4,4 L13,13 M13,4 L4,13" stroke="#1a1a1a" stroke-width="2.2"/></svg>
<div class="a" style="left:1630px;top:33px;width:200px;height:18px;background:#fff;border:1px solid #b4b4b4"></div>
<svg class="a" style="left:1810px;top:33px" width="20" height="18"><circle cx="8.5" cy="7.5" r="4.2" fill="none" stroke="#b0b0b0" stroke-width="1.7"/><path d="M11.5,10.5 L16,15.5" stroke="#b0b0b0" stroke-width="2.2"/></svg>
<div class="a" style="left:1895px;top:33px;width:17px;height:17px;background:#f26e21;border-radius:2px"></div>
<div class="a" style="left:1902px;top:36px;width:3px;height:3px;background:#222"></div>
<div class="a" style="left:1902px;top:40px;width:3px;height:7px;background:#222"></div>

<div class="a rib"></div>
<div class="a ribline"></div>
<div class="a" style="left:276px;top:68px;width:52px;height:70px;background:#dcdcdc"></div>
<div class="a" style="left:829px;top:68px;width:63px;height:70px;background:#dcdcdc"></div>
<div class="a" style="left:6px;top:67px;width:59px;height:30px;background:#dcdcdc;border:1px solid #a0a0a0"></div>
<div class="t" style="left:12px;top:76px;font-size:13px;color:#f0f0f0">CON1</div>
<svg class="a" style="left:0;top:0" width="1920" height="160" fill="none" stroke-linecap="butt">
<path d="M55,80.5 h5 l-2.5,3 z" fill="#eeeeee" stroke="none"/>
<!-- separators -->
<rect x="145" y="63" width="5" height="92" fill="#c8c8c8" stroke="none"/>
<path d="M268.5,126 V155 M405.5,63 V155 M491.5,63 V155 M636.5,63 V155 M776.5,63 V155 M960.5,63 V155 M1114.5,63 V155 M1254.5,63 V155" stroke="#b4b4b4" stroke-width="1"/>
<!-- New (disabled) -->
<path d="M85.5,74.5 H81 L73.5,82 V100.5 H95.5 V85 M73.5,82 H81 V74.5" stroke="#bdbdbd" stroke-width="1"/>
<path d="M95.5,69 V80 M90,74.5 H101" stroke="#f8c2a0" stroke-width="1"/>
<!-- Copy (disabled) -->
<path d="M117.5,74.5 H131.5 V100.5 H109.5 V82 Z M109.5,82 H117.5 V74.5" stroke="#bdbdbd" stroke-width="1"/>
<path d="M122,69 H136.5 V97" stroke="#f8c2a0" stroke-width="1"/>
<!-- Undo -->
<path d="M158.5,100.5 H176 A14.5,13.5 0 0 0 176,73.5 H160 M165,69 L159,73.5 L165,78" stroke="#1e1e1e" stroke-width="1.3"/>
<!-- Redo disabled -->
<path d="M220,100.5 H208 A14,13.5 0 0 1 208,73.5 H225" stroke="#c8c8c8" stroke-width="1.2"/>
<!-- Save -->
<path d="M246.5,69 V93.5 M241,88 L246.5,93.5 L252,88" stroke="#f26e21" stroke-width="1.3"/>
<path d="M230.5,94 V100.5 H261.5 V94" stroke="#1e1e1e" stroke-width="1.3"/>
<rect x="222.3" y="62.8" width="46" height="60.5" stroke="#e81c24" stroke-width="4.6"/>
<!-- Members box -->
<path d="M286,73.8 H300.5 L318,82.8 V95.3 H302.6 L286,85.1 Z M286,73.8 L302.6,82.8 H318 M302.6,82.8 V95.3" stroke="#1e1e1e" stroke-width="1.3" stroke-linejoin="round"/>
<!-- Plates -->
<rect x="337.5" y="69.5" width="19" height="31" stroke="#1e1e1e" stroke-width="1.3"/>
<circle cx="342" cy="74" r="1.6" stroke="#1e1e1e" stroke-width="1"/><circle cx="352" cy="74" r="1.6" stroke="#1e1e1e" stroke-width="1"/>
<circle cx="342" cy="96" r="1.6" stroke="#1e1e1e" stroke-width="1"/><circle cx="352" cy="96" r="1.6" stroke="#1e1e1e" stroke-width="1"/>
<!-- LCS -->
<path d="M380.5,88 V69.5 M376.5,73.5 L380.5,69.5 L384.5,73.5 M380.5,88 H399 M395,84 L399,88 L395,92 M380.5,88 L367.5,100.5 M367.5,95 V100.5 H373" stroke="#1e1e1e" stroke-width="1.3"/>
<!-- New picture -->
<path d="M431,74.5 H414.5 V100.5 H440.5 V85" stroke="#1e1e1e" stroke-width="1.3"/>
<path d="M414.5,100 L422,91 L426,94.5 L433,87.5 L440.5,93" stroke="#1e1e1e" stroke-width="1.3"/>
<circle cx="426.5" cy="82.5" r="1.7" fill="#1e1e1e" stroke="none"/>
<path d="M440.5,69 V80 M435,74.5 H446" stroke="#f26e21" stroke-width="1.3"/>
<!-- Gallery -->
<rect x="451.5" y="74.5" width="26" height="26" stroke="#1e1e1e" stroke-width="1.3"/>
<path d="M451.5,100 L459,91 L463,94.5 L470,87.5 L477.5,93" stroke="#1e1e1e" stroke-width="1.3"/>
<circle cx="463.5" cy="82.5" r="1.7" fill="#1e1e1e" stroke="none"/>
<path d="M455,69.5 H482.5 V96.5" stroke="#1e1e1e" stroke-width="1.3"/>
<!-- Propose / Publish / Manage -->
<path d="M505.5,69 V100.5 M511.5,69 V100.5 M511.5,84.5 H528 M511.5,88.5 H528" stroke="#1e1e1e" stroke-width="1.3"/>
<circle cx="531" cy="74" r="3.3" stroke="#f26e21" stroke-width="1.3"/><path d="M533.5,76.5 L537,80" stroke="#f26e21" stroke-width="1.5"/>
<path d="M549.5,69 V100.5 M555.5,69 V100.5 M555.5,84.5 H572 M555.5,88.5 H572" stroke="#1e1e1e" stroke-width="1.3"/>
<path d="M576.5,69.5 V79.5 M573,73 L576.5,69.5 L580,73" stroke="#f26e21" stroke-width="1.3"/>
<path d="M593.5,69 V100.5 M599.5,69 V100.5 M599.5,84.5 H616 M599.5,88.5 H616" stroke="#1e1e1e" stroke-width="1.3"/>
<path d="M614.3,79.8 L615.6,75.2 L622.3,68.8 L625.5,72 L618.9,78.4 Z M615.6,75.2 L618.9,78.4" fill="none" stroke="#f26e21" stroke-width="1.3" stroke-linejoin="round"/><path d="M614.3,79.8 L616.5,76.5 L617.6,77.6 Z" fill="#f26e21"/>
<!-- Code setup gear -->
<path d="M660.7,69.5 l3,0 l1,3.5 l3.2,1.5 l3.2,-1.8 l2.2,2.2 l-1.8,3.2 l1.5,3.2 l3.5,1 v3 l-3.5,1 l-1.5,3.2 l1.8,3.2 l-2.2,2.2 l-3.2,-1.8 l-3.2,1.5 l-1,3.5 h-3 l-1,-3.5 l-3.2,-1.5 l-3.2,1.8 l-2.2,-2.2 l1.8,-3.2 l-1.5,-3.2 l-3.5,-1 v-3 l3.5,-1 l1.5,-3.2 l-1.8,-3.2 l2.2,-2.2 l3.2,1.8 l3.2,-1.5 l1,-3.5 Z" stroke="#c4c4c4" stroke-width="1.1" transform="translate(-1.5,0)"/>
<path d="M655,81 L651.5,85 L655,89 M666.5,81 L670,85 L666.5,89 M662.5,79.5 L659,90.5" stroke="#c4c4c4" stroke-width="1.1"/>
<!-- Calculate -->
<rect x="689.5" y="69.5" width="31" height="31" stroke="#c4c4c4" stroke-width="1.1"/>
<path d="M697.5,73 V81 M693.5,77 H701.5 M708,73.5 L714,79.5 M714,73.5 L708,79.5 M693.5,90.5 H701.5 M708,88.5 H714 M708,94 H714" stroke="#f8c2a0" stroke-width="1.1"/>
<circle cx="697.5" cy="87.5" r="0.7" fill="#f8c2a0" stroke="none"/><circle cx="697.5" cy="94" r="0.7" fill="#f8c2a0" stroke="none"/>
<!-- Overall check -->
<path d="M763,74 A15,15 0 1 0 767,85" stroke="#c4c4c4" stroke-width="1.1"/>
<path d="M759,78 A10,10 0 1 0 762,85" stroke="#c4c4c4" stroke-width="1.1"/>
<path d="M745.5,85 L751,90.5 L767.5,74 M748,82.5 L751,85.5 L765.5,71" stroke="#f8c2a0" stroke-width="1.1"/>
<!-- Settings -->
<path d="M795.5,69.5 V100.5 M806.5,69.5 V100.5 M817.5,69.5 V100.5 M793,86 H798 M804,91.5 H809 M815,79 H820" stroke="#c4c4c4" stroke-width="1.1"/>
<!-- Scales -->
<path d="M861.5,72 V100.5 M853.5,100.5 H869.5 M846.5,71.5 H876.5 M850,71.5 L846,87.5 H856 L852,71.5 M872,71.5 L868,87.5 H878 L874,71.5" stroke="#b4b4b4" stroke-width="1.1"/>
<path d="M861.5,68.5 L863.5,70.5 L861.5,72.5 L859.5,70.5 Z" stroke="#b4b4b4" stroke-width="1"/>
<!-- Loads percentage -->
<path d="M908,100.5 H939.5 M915.5,74 V99 M923.5,74 V99 M931.5,82 V99 M911.5,95 L915.5,99 L919.5,95 L923.5,99 L927.5,95 L931.5,99 L935.5,95" stroke="#c4c4c4" stroke-width="1.1"/>
<text x="929" y="80" font-size="10" fill="#f8c2a0" stroke="none" font-family="Liberation Sans">%</text>
<!-- XLS import -->
<path d="M971.5,100.5 V77 L977.5,69.5 H989 M971.5,77 H977.5 V69.5 M971.5,100.5 H998.5 V83" stroke="#c4c4c4" stroke-width="1.1"/>
<text x="976.5" y="95" font-size="13" fill="#c4c4c4" stroke="none" font-family="Liberation Sans" textLength="18.5" lengthAdjust="spacingAndGlyphs">XLS</text>
<path d="M998.5,69.5 V79.5 M995,76 L998.5,79.5 L1002,76" stroke="#f8c2a0" stroke-width="1.1"/>
<!-- Connection import -->
<path d="M1024,94.5 H1056 M1024,100.5 H1056 M1027,84 L1037,94 M1032,84 L1040,94 M1040,94 L1048,84 M1043,94 L1053,84" stroke="#c4c4c4" stroke-width="1.1"/>
<path d="M1051.5,69.5 V79.5 M1048,76 L1051.5,79.5 L1055,76" stroke="#f8c2a0" stroke-width="1.1"/>
<!-- XLS export -->
<path d="M1075.5,100.5 V77 L1081.5,69.5 H1093 M1075.5,77 H1081.5 V69.5 M1075.5,100.5 H1102.5 V83" stroke="#c4c4c4" stroke-width="1.1"/>
<text x="1080.5" y="95" font-size="13" fill="#c4c4c4" stroke="none" font-family="Liberation Sans" textLength="18.5" lengthAdjust="spacingAndGlyphs">XLS</text>
<path d="M1102.5,69.5 V79.5 M1099,73 L1102.5,69.5 L1106,73" stroke="#f8c2a0" stroke-width="1.1"/>
<!-- Model entity -->
<path d="M1124.5,80 L1138,80 L1155.5,88 V100.5 H1140 L1124.5,93 Z M1124.5,80 L1140,88 H1155.5 M1140,88 V100.5" stroke="#c4c4c4" stroke-width="1.1" stroke-linejoin="round"/>
<path d="M1150.5,69 V80 M1145,74.5 H1156" stroke="#f8c2a0" stroke-width="1.1"/>
<!-- Load -->
<path d="M1160,100.5 H1192 M1167.5,74 V99 M1175.5,74 V99 M1183.5,82 V99 M1163.5,95 L1167.5,99 L1171.5,95 L1175.5,99 L1179.5,95 L1183.5,99 L1187.5,95" stroke="#c4c4c4" stroke-width="1.1"/>
<path d="M1186.5,69 V80 M1181,74.5 H1192" stroke="#f8c2a0" stroke-width="1.1"/>
<!-- Operation -->
<path d="M1206.5,82.5 L1221,82.5 L1232.5,88 M1206.5,82.5 V92 L1217.5,100.5 M1206.5,82.5 L1217.5,88" stroke="#1e1e1e" stroke-width="1.3" stroke-linejoin="round"/>
<rect x="1217.5" y="88" width="15" height="12.5" stroke="#f26e21" stroke-width="1.3"/>
<path d="M1232.5,69 V80 M1227,74.5 H1238" stroke="#f26e21" stroke-width="1.3"/>
</svg>
<div class="t dis" style="left:75px;top:105.2px;font-size:12px">New</div>
<div class="t dis" style="left:109px;top:105.2px;font-size:12px">Copy</div>
<div class="t" style="left:159px;top:105.2px;font-size:12px">Undo</div>
<div class="t dis" style="left:196px;top:105.2px;font-size:12px">Redo</div>
<div class="t" style="left:234px;top:105.2px;font-size:12px">Save</div>
<div class="t" style="left:277px;top:104.4px;font-size:12px;letter-spacing:-0.15px">Members</div>
<div class="t" style="left:332px;top:104.4px;font-size:12px">Plates</div>
<div class="t" style="left:373px;top:104.4px;font-size:12px">LCS</div>
<div class="t" style="left:418px;top:105.2px;font-size:12px">New</div>
<div class="t" style="left:450px;top:105.2px;font-size:12px">Gallery</div>
<div class="t" style="left:499px;top:105.2px;font-size:12px;letter-spacing:-0.3px">Propose</div>
<div class="t" style="left:545px;top:105.2px;font-size:12px">Publish</div>
<div class="t" style="left:587px;top:105.2px;font-size:12px;letter-spacing:-0.2px">Manage</div>
<div class="t dis" style="left:647px;top:105.2px;font-size:12px">Code</div>
<div class="t dis" style="left:647px;top:120.2px;font-size:12px">setup</div>
<div class="t dis" style="left:680px;top:105.2px;font-size:12px;letter-spacing:-0.2px">Calculate</div>
<div class="t dis" style="left:733px;top:105.2px;font-size:12px">Overall</div>
<div class="t dis" style="left:736px;top:120.2px;font-size:12px">check</div>
<div class="t dis" style="left:784px;top:105.2px;font-size:12px;letter-spacing:-0.3px">Settings</div>
<div class="t" style="left:839px;top:105.2px;font-size:12px;color:#bcbcbc">Loads in</div>
<div class="t" style="left:830px;top:120.2px;font-size:12px;color:#bcbcbc">equilibrium</div>
<div class="t dis" style="left:905px;top:105.2px;font-size:12px">Loads -</div>
<div class="t dis" style="left:896px;top:120.2px;font-size:12px">percentage</div>
<div class="t dis" style="left:977px;top:105.2px;font-size:12px">XLS</div>
<div class="t dis" style="left:969px;top:120.2px;font-size:12px">Import</div>
<div class="t dis" style="left:1008px;top:105.2px;font-size:12px">Connection</div>
<div class="t dis" style="left:1022px;top:120.2px;font-size:12px">Import</div>
<div class="t dis" style="left:1081px;top:105.2px;font-size:12px">XLS</div>
<div class="t dis" style="left:1075px;top:120.2px;font-size:12px">Export</div>
<div class="t dis" style="left:1122px;top:105.2px;font-size:12px">Model</div>
<div class="t dis" style="left:1125px;top:120.2px;font-size:12px">entity</div>
<div class="t dis" style="left:1163px;top:105.2px;font-size:12px">Load</div>
<div class="t" style="left:1195px;top:105.2px;font-size:12px">Operation</div>
<div class="grp" style="left:36px;top:142px;font-size:12px;color:#f7a87a">Project items</div>
<div class="grp" style="left:198px;top:142px;font-size:12px">Data</div>
<div class="grp" style="left:321px;top:142px;font-size:12px">Labels</div>
<div class="grp" style="left:428px;top:142px;font-size:12px">Pictures</div>
<div class="grp" style="left:514px;top:142px;font-size:12px">Connection Library</div>
<div class="grp" style="left:689px;top:142px;font-size:12px">CBFEM</div>
<div class="grp" style="left:849px;top:142px;font-size:12px">Options</div>
<div class="grp" style="left:985px;top:142px;font-size:12px">Import/Export loads</div>
<div class="grp" style="left:1173px;top:142px;font-size:12px">New</div>


<svg class="a" style="left:0;top:158px" width="1386" height="841" viewBox="0 158 1386 841">
<defs>
<linearGradient id="gWeb2" gradientUnits="userSpaceOnUse" x1="560" y1="600" x2="700" y2="760">
<stop offset="0" stop-color="#37485d"/><stop offset="0.75" stop-color="#35465b"/><stop offset="1" stop-color="#26334a"/></linearGradient>
<linearGradient id="gBf" gradientUnits="userSpaceOnUse" x1="640" y1="761" x2="675.3" y2="802.1">
<stop offset="0" stop-color="#4a6181"/><stop offset="0.32" stop-color="#6f8fb9"/><stop offset="0.6" stop-color="#7899c3"/><stop offset="1" stop-color="#7a9bc5"/></linearGradient>
<radialGradient id="gTf" gradientUnits="userSpaceOnUse" cx="705" cy="482" r="60">
<stop offset="0" stop-color="#4f6684"/><stop offset="1" stop-color="#7a9bc5"/></radialGradient>
<linearGradient id="gBfL" gradientUnits="userSpaceOnUse" x1="340" y1="930" x2="402" y2="930">
<stop offset="0" stop-color="#7a9bc5"/><stop offset="0.6" stop-color="#7192bc"/><stop offset="1" stop-color="#5d7798"/></linearGradient>
<linearGradient id="gWeb3" gradientUnits="userSpaceOnUse" x1="480" y1="284.6" x2="466" y2="335">
<stop offset="0" stop-color="#5c799e"/><stop offset="0.5" stop-color="#6483aa"/><stop offset="1" stop-color="#6b8ab1"/></linearGradient>
<radialGradient id="gOr" gradientUnits="userSpaceOnUse" cx="760" cy="420" r="200">
<stop offset="0" stop-color="#b4541d"/><stop offset="1" stop-color="#ab4d1a"/></radialGradient>
<linearGradient id="gOrShade" gradientUnits="userSpaceOnUse" x1="918" y1="370" x2="870" y2="430">
<stop offset="0" stop-color="#7a3410" stop-opacity="0.9"/><stop offset="1" stop-color="#b0501c" stop-opacity="0"/></linearGradient>
<linearGradient id="gCh" gradientUnits="userSpaceOnUse" x1="919" y1="490" x2="952" y2="510">
<stop offset="0" stop-color="#3a4960"/><stop offset="1" stop-color="#5d7190"/></linearGradient>
</defs>
<!-- dash-dot axes -->
<path d="M923,448.8 L1062.6,488.8" stroke="#8db4e6" stroke-width="1" stroke-dasharray="9,4,2,4" fill="none"/>
<path d="M324.7,895.5 L402.2,828.8" stroke="#8db4e6" stroke-width="1" stroke-dasharray="9,4,2,4" fill="none"/>
<!-- RM2 far top flange -->
<polygon points="827.4,241.6 956.5,279.1 869.4,356 737.4,320" fill="#7a9bc5"/>
<polygon points="956.5,279.1 956.5,287.8 894.9,345.6 891,348.5 880,352 870,356 883.3,343.7" fill="#34445a"/>
<path d="M827.4,241.6 L956.5,279.1 L883.3,343.7" stroke="#9fc0ec" stroke-width="1" fill="none"/>
<!-- RM3 web -->
<polygon points="378.2,255 600,319 600,446.3 378.2,383.4" fill="url(#gWeb3)"/>
<path d="M378.2,255 V383.4 L600,446.3" stroke="#9fc2f0" stroke-width="1.8" fill="none"/>
<!-- RM2 bottom flange -->
<polygon points="340.2,942 402.2,889.3 895.4,540.1 957.1,557 470.4,977.7" fill="url(#gBf)"/>
<polygon points="340.2,942 402.2,889.3 402.2,959 " fill="url(#gBfL)"/>
<polygon points="340.2,942 470.4,977.7 470.4,988.5 340.2,951.3" fill="#6d8db8"/>
<polygon points="470.4,977.7 957.1,557 957.1,567 470.4,988.5" fill="#34455a"/>
<path d="M340.2,951.3 V942 L402.2,889.3 M340.2,942 L470.4,977.7 L957.1,557 L895.4,540.1 M470.4,977.7 V988.5" stroke="#a3c3ee" stroke-width="1" fill="none"/>
<!-- AM1 lower channel end -->
<polygon points="919.5,486.5 952.1,494.7 952.1,512.1 919.5,502.8" fill="url(#gCh)"/>
<polygon points="919.5,503 952.1,512.1 919.5,538.8" fill="#6a809e"/>
<path d="M919.5,486.5 L952.1,494.7 V512.1 L919.5,538.8 M919.5,503 L952.1,512.1" stroke="#a3c3ee" stroke-width="1.5" fill="none"/>
<!-- RM2 web -->
<polygon points="409,690 469.8,708 728.2,484 895.4,530 895.4,540.6 409,959" fill="url(#gWeb2)"/>
<rect x="402.2" y="686.2" width="6.8" height="279.1" fill="#7898c2" stroke="#a3c3ee" stroke-width="1"/>
<!-- RM2 top flange -->
<polygon points="340.6,662.8 600,440 722,482 469.8,700.6" fill="url(#gTf)"/>
<polygon points="340.6,662.8 469.8,700.6 469.8,710.6 340.6,672.8" fill="#6f90bb"/>
<polygon points="469.8,700.6 719.7,484.8 728.2,486.4 469.8,710.6" fill="#3b4b60"/>
<path d="M340.6,672.8 V662.8 L600,440 M340.6,662.8 L469.8,700.6 L719.7,484.8 M469.8,710.6 L728.2,486.4 M469.8,700.6 V710.6" stroke="#a3c3ee" stroke-width="1" fill="none"/>
<!-- Orange plates -->
<polygon points="585.4,300 701.3,334 701.3,474.5 585.4,441.8" fill="url(#gOr)"/>
<polygon points="701.3,334 705,335 705,477.7 701.3,474.5" fill="#3a1a08"/>
<polygon points="705,340 918.9,356.2 919.3,538.2 705,477.7" fill="url(#gOr)"/>
<polygon points="886,384 918.9,356.2 919.3,450 870,430" fill="url(#gOrShade)"/>
<path d="M585.4,315.6 V441.8 L701.3,474.5 M705,477.7 L919.3,538.2 V356.7 M700.8,340 V474.5 M705.6,345 V477.7" stroke="#f07828" stroke-width="1.2" fill="none"/>
<path d="M705,477.7 L919.3,538.2" stroke="#9fc0ec" stroke-width="0.8" fill="none" transform="translate(0,1.5)"/>
<!-- RM3 top flange -->
<polygon points="377.8,199.8 918.9,356.2 887.1,384.2 345.9,227.7" fill="#7a9bc5"/>
<polygon points="345.9,227.7 887.1,384.2 886.2,401.5 345.9,246" fill="#6d8db8"/>
<path d="M377.8,199.8 L918.9,356.2 L887.1,384.2 L345.9,227.7 Z M345.9,246 L886.2,401.5 V384.2 M345.9,227.7 V246" stroke="#95b6e2" stroke-width="1" fill="none"/>
<polygon points="345.9,227.7 887.1,384.2 887.1,388.4 345.9,231.9" fill="#90b8ea"/>
<path d="M346,229.8 L887,386.3" stroke="#d4eaff" stroke-width="1.1" stroke-dasharray="2.5,2" fill="none"/>
<path d="M646.3,278.2 L615.4,304.2 V320.6" stroke="#a3c3ee" stroke-width="1" fill="none"/>
<!-- Base plate (SM1 flange) -->
<polygon points="585.4,441.8 701.3,474.5 702.7,482 699,484.7 583.5,454.1" fill="#26356a"/>
<polygon points="584.5,447.5 700.5,480 700,483.5 584,452" fill="#5c70a8"/>
<path d="M583.5,443 Q581,452 577,456" stroke="#fff" stroke-width="3" fill="none"/>
<polygon points="555.9,476.7 583.5,454.1 699,484.7 694.7,490 670.7,509.4" fill="#2a3a6c"/>
<polygon points="555.9,476.7 670.7,509.4 670.7,518.1 555.9,485.4" fill="#1d2850"/>
<polygon points="670.7,509.4 694.7,490 694.7,500 670.7,518.1" fill="#16203f"/>
<polygon points="694.7,490 702.7,482 702.7,492 694.7,500" fill="#131a35"/>
<path d="M555.9,476.7 L583.5,454.1 M555.9,476.7 L670.7,509.4 L694.7,490 M583.5,454.1 L699,484.7 M574,464 L696,496" stroke="#4a62a8" stroke-width="1" fill="none"/>
<path d="M585.4,441.8 L701.3,474.5" stroke="#f07828" stroke-width="1.2" fill="none"/>
<g transform="translate(605.3,411.3)">
<polygon points="-4,-12.4 3.4,-12.4 5.5,-11.1 10.9,-5.7 12.2,-2.3 12.2,3.8 10.2,7.2 4.8,10.3 -1.3,12.3 -4,12.3 -7.4,9.3 -12.2,5.2 -12.2,-4.3 -8.1,-9" fill="#b89a00" stroke="#ffd800" stroke-width="1.2"/>
<polygon points="-2,-7.7 0.7,-9.7 8.2,-2.9 5.5,-0.9" fill="#7a6600"/>
<polygon points="5.8,-0.6 8.5,-1.2 8.5,5.9 5.8,8.2" fill="#3a3000"/>
<path d="M-12,-4.3 L-5,-4.3 L-2,-7.7 M-3,-6.5 L5.8,-0.6 V8.2 L0,12" stroke="#ffd800" stroke-width="1" fill="none"/>
</g><g transform="translate(677.3,432)">
<polygon points="-4,-12.4 3.4,-12.4 5.5,-11.1 10.9,-5.7 12.2,-2.3 12.2,3.8 10.2,7.2 4.8,10.3 -1.3,12.3 -4,12.3 -7.4,9.3 -12.2,5.2 -12.2,-4.3 -8.1,-9" fill="#b89a00" stroke="#ffd800" stroke-width="1.2"/>
<polygon points="-2,-7.7 0.7,-9.7 8.2,-2.9 5.5,-0.9" fill="#7a6600"/>
<polygon points="5.8,-0.6 8.5,-1.2 8.5,5.9 5.8,8.2" fill="#3a3000"/>
<path d="M-12,-4.3 L-5,-4.3 L-2,-7.7 M-3,-6.5 L5.8,-0.6 V8.2 L0,12" stroke="#ffd800" stroke-width="1" fill="none"/>
</g><g transform="translate(591,465)">
<polygon points="-12,2.4 -12,7.3 -5.8,11.7 5.7,11.7 11.9,6.7 11.9,2.4" fill="#8a7000" stroke="#ffd800" stroke-width="1.2"/>
<polygon points="-10.7,-3.5 -5.8,0.8 -5.8,8.2 -10.7,4.2" fill="#a08300" stroke="#ffd800" stroke-width="1"/>
<polygon points="5.7,0.8 11.3,-4.1 11.3,4.2 5.7,8.2" fill="#3a3000" stroke="#ffd800" stroke-width="1"/>
<rect x="-5.8" y="0.8" width="11.5" height="7.4" fill="#7a6300" stroke="#ffd800" stroke-width="1.2"/>
<polygon points="-5.8,-8.8 5.7,-8.8 11.3,-4.1 5.7,0.8 -5.8,0.8 -10.7,-3.5" fill="#c8a400" stroke="#ffd800" stroke-width="1.2"/>
</g><g transform="translate(663,486)">
<polygon points="-12,2.4 -12,7.3 -5.8,11.7 5.7,11.7 11.9,6.7 11.9,2.4" fill="#8a7000" stroke="#ffd800" stroke-width="1.2"/>
<polygon points="-10.7,-3.5 -5.8,0.8 -5.8,8.2 -10.7,4.2" fill="#a08300" stroke="#ffd800" stroke-width="1"/>
<polygon points="5.7,0.8 11.3,-4.1 11.3,4.2 5.7,8.2" fill="#3a3000" stroke="#ffd800" stroke-width="1"/>
<rect x="-5.8" y="0.8" width="11.5" height="7.4" fill="#7a6300" stroke="#ffd800" stroke-width="1.2"/>
<polygon points="-5.8,-8.8 5.7,-8.8 11.3,-4.1 5.7,0.8 -5.8,0.8 -10.7,-3.5" fill="#c8a400" stroke="#ffd800" stroke-width="1.2"/>
</g>
<path d="M761.3,366 V451.2 M713.9,419 L761.8,432.3 M715,437.3 L768,452.5" stroke="#111" stroke-width="1.1" fill="none"/>
<circle cx="761.3" cy="431" r="1.8" fill="#111"/><circle cx="761.3" cy="445" r="2" fill="#111"/>
</svg>
<div class="lbl" style="left:421px;top:326px;width:32px;height:18px">RM3</div>
<div class="lbl" style="left:614.5px;top:702px;width:33px;height:18px">RM2</div>
<div class="lbl" style="left:746px;top:408.4px;width:31px;height:17px">SM1</div>
<div class="lbl" style="left:710px;top:439px;width:31px;height:18px">SM1</div>
<div class="lbl" style="left:780.7px;top:429.8px;width:31px;height:18.4px">AM1</div>
<div class="lbl tan" style="left:761.3px;top:374.3px;width:22.7px;height:14.4px">125</div>
<div class="lbl tan" style="left:760.5px;top:428.5px;width:17.7px;height:14px">25</div>


<!-- viewport toolbar -->
<div class="a" style="left:1247px;top:158px;width:32px;height:32px;background:#ebebeb;border-right:1px solid #d6d6d6"></div>
<svg class="a" style="left:1060px;top:156px" width="326" height="140" viewBox="1060 156 326 140" fill="none">
<path d="M1079.5,172 V167.5 H1084 M1080,168 L1084,172 M1092.5,172 V167.5 H1088 M1092,168 L1088,172 M1079.5,177 V181.5 H1084 M1080,181 L1084,177 M1092.5,177 V181.5 H1088 M1092,181 L1088,177" stroke="#111" stroke-width="1.4"/>
<path d="M1112.6,181.3 C1104,183.5 1104,176 1112.3,168.6 M1108,168.4 H1112.6 V172.7 M1115.3,167.3 C1124,164 1125,172 1115.8,179 M1115.3,175 V179.4 H1119.8" stroke="#111" stroke-width="1.3"/>
<path d="M1130.2,172.4 L1134,176.7 L1138,172.4 M1171.2,172.4 L1175,176.7 L1179,172.4" stroke="#666" stroke-width="1.1"/>
<path d="M1142.5,160.3 V187.6" stroke="#cfcfcf" stroke-width="1"/>
<path d="M1147.3,169 H1160 V181.8 M1150.5,166.5 V178.5 H1162.6" stroke="#cccccc" stroke-width="1.1"/>
<path d="M1191.1,170.8 L1195.6,166.2 H1206.7 V176.7 L1202,181.4 H1191.1 Z M1191.1,170.8 H1202 V181.4 M1202,170.8 L1206.7,166.2 M1195.6,166.5 V176.6 H1206.5 M1191.5,181 L1195.6,176.6" stroke="#111" stroke-width="1.3"/>
<path d="M1223.2,170.8 L1227.6,166.1 H1238.9 V176.7 L1234.2,181.6 H1223.2 Z" fill="#c8c8c8" stroke="#111" stroke-width="1.3"/>
<path d="M1223.2,170.8 H1234.2 V181.6 M1234.2,170.8 L1238.9,166.1 M1227.6,166.5 V176.6 H1238.5 M1223.5,181 L1227.6,176.6" stroke="#111" stroke-width="1.2"/>
<path d="M1255,171 L1259.5,166 H1270.9 V176.7 L1266,181.6 H1255 Z" fill="#000"/>
<path d="M1255.5,171.5 H1265.5 V181.5 M1265.5,171.5 L1270.5,166.5" stroke="#fff" stroke-width="0.9"/>
<path d="M1288.3,169.9 L1299.4,168.2 L1303.6,169.5 L1293.4,171.6 Z M1288.3,169.9 V176.5 L1293.4,179.3 L1303.6,173.3 V169.5 M1293.4,171.6 V179.3" stroke="#111" stroke-width="1.3" stroke-linejoin="round"/>
<path d="M1327,166 V181.6 M1329.5,166 V181.6 M1321,175 C1321,172 1336,172 1336,175 C1336,178 1331,178.5 1331,178.5 M1325,178.5 C1322,178 1321,176.5 1321,175 M1323.5,176.5 L1322,178.3 L1324.5,179" stroke="#c8c8c8" stroke-width="1.1"/>
<path d="M1352.5,173.5 L1360,167 L1367.5,173.5 M1354.5,172 V180.5 H1358 V175.5 H1362 V180.5 H1365.5 V172" stroke="#111" stroke-width="1.3" stroke-linejoin="round"/>
<!-- nav cube -->
<ellipse cx="1331" cy="263.5" rx="33.5" ry="17.5" stroke="#dcdcdc" stroke-width="9"/>
<polygon points="1304.4,231.7 1325.3,220.1 1355.1,226.3 1352.8,255.3 1337.7,273.9 1307.5,262.7" fill="#a8a8a8" fill-opacity="0.92"/>
<path d="M1304.4,231.7 L1325.3,220.1 L1355.1,226.3 L1339.2,239.8 Z M1304.4,231.7 L1307.5,262.7 L1337.7,273.9 L1352.8,255.3 L1355.1,226.3 M1339.2,239.8 L1337.7,273.9 M1325.3,220.1 V248 L1307.5,262.7 M1325.3,248 L1352.8,255.3" stroke="#7c7c7c" stroke-width="1"/>
<path d="M1329,230 L1333.5,229" stroke="#eee" stroke-width="1.2"/>
<path d="M1347.5,246 L1347,251.5 M1320,256 L1323,259 M1321.5,257 V261" stroke="#eee" stroke-width="1"/>
<path d="M1296.5,249 L1305,247.5 M1302,245 L1303.5,250.5 M1360,267.5 L1370.5,271 L1367,269" stroke="#888" stroke-width="1"/>
<path d="M1303,284.5 L1309,279 M1309,279 L1308,273.5 M1309,279 L1316,276.5" stroke="#9a9a9a" stroke-width="2.4"/>
</svg>
<div class="t" style="left:1130px;top:205px;font-size:11.6px;font-weight:bold;color:#f26e21">Production cost</div>
<div class="t" style="left:1224px;top:205px;font-size:12px;font-weight:bold;color:#333">-</div>
<div class="t" style="left:1234px;top:205px;font-size:12px;font-weight:bold;color:#1a1a1a">17 &#8364;</div>
<!-- tree -->
<div class="t" style="left:1269.5px;top:308px;font-size:12.3px;font-weight:bold;color:#333">CON1</div>
<svg class="a" style="left:1260px;top:320px" width="130" height="210" viewBox="1260 320 130 210">
<path d="M1267.5,338.5 L1273.3,333.7 V338.5 Z M1267.5,428.5 L1273.3,423.7 V428.5 Z" fill="#444"/>
<polygon points="1279.8,501.2 1355.8,501.2 1371,511.6 1355.8,522 1279.8,522" fill="#f26e21"/>
</svg>
<div class="t" style="left:1290.5px;top:331px;font-size:12.8px;font-weight:bold;color:#333">Members</div>
<div class="t" style="left:1290.5px;top:419px;font-size:12.6px;font-weight:bold;color:#333">Operations</div>
<div class="a" style="left:1290.3px;top:352.3px;width:10.5px;height:10.5px;background:#e6e6e6;border-radius:2px"></div>
<svg class="a" style="left:1290px;top:350.3px" width="16" height="14"><path d="M2.5,7.8 L5.8,11.1 L13,1.2" stroke="#8c8c8c" stroke-width="1.9" fill="none"/></svg>
<div class="t" style="left:1317.2px;top:352.8px;font-size:12px;color:#3a3a3a;font-weight:normal">AM1</div>
<div class="a" style="left:1290.3px;top:374.5px;width:10.5px;height:10.5px;background:#e6e6e6;border-radius:2px"></div>
<svg class="a" style="left:1290px;top:372.5px" width="16" height="14"><path d="M2.5,7.8 L5.8,11.1 L13,1.2" stroke="#8c8c8c" stroke-width="1.9" fill="none"/></svg>
<div class="t" style="left:1317.2px;top:375.0px;font-size:12px;color:#3a3a3a;font-weight:normal">RM2</div>
<div class="a" style="left:1290.3px;top:396.7px;width:10.5px;height:10.5px;background:#e6e6e6;border-radius:2px"></div>
<svg class="a" style="left:1290px;top:394.7px" width="16" height="14"><path d="M2.5,7.8 L5.8,11.1 L13,1.2" stroke="#8c8c8c" stroke-width="1.9" fill="none"/></svg>
<div class="t" style="left:1317.2px;top:397.2px;font-size:12px;color:#3a3a3a;font-weight:normal">RM3</div>
<div class="a" style="left:1290.3px;top:440.5px;width:10.5px;height:10.5px;background:#e6e6e6;border-radius:2px"></div>
<svg class="a" style="left:1290px;top:438.5px" width="16" height="14"><path d="M2.5,7.8 L5.8,11.1 L13,1.2" stroke="#f58220" stroke-width="1.9" fill="none"/></svg>
<div class="t" style="left:1317.2px;top:441.0px;font-size:12px;color:#3a3a3a;font-weight:normal">SM1</div>
<div class="a" style="left:1290.3px;top:462.6px;width:10.5px;height:10.5px;background:#e6e6e6;border-radius:2px"></div>
<svg class="a" style="left:1290px;top:460.6px" width="16" height="14"><path d="M2.5,7.8 L5.8,11.1 L13,1.2" stroke="#f58220" stroke-width="1.9" fill="none"/></svg>
<div class="t" style="left:1317.2px;top:463.1px;font-size:12px;color:#3a3a3a;font-weight:normal">GRD1</div>
<div class="a" style="left:1290.3px;top:484.7px;width:10.5px;height:10.5px;background:#e6e6e6;border-radius:2px"></div>
<svg class="a" style="left:1290px;top:482.7px" width="16" height="14"><path d="M2.5,7.8 L5.8,11.1 L13,1.2" stroke="#f58220" stroke-width="1.9" fill="none"/></svg>
<div class="t" style="left:1317.2px;top:485.2px;font-size:12px;color:#3a3a3a;font-weight:normal">GRD2</div>
<div class="a" style="left:1290.3px;top:506.8px;width:10.5px;height:10.5px;background:#e6e6e6;border-radius:2px"></div>
<svg class="a" style="left:1290px;top:504.8px" width="16" height="14"><path d="M2.5,7.8 L5.8,11.1 L13,1.2" stroke="#f58220" stroke-width="1.9" fill="none"/></svg>
<div class="t" style="left:1317.2px;top:507.3px;font-size:12px;color:#fff;font-weight:bold">GRD3</div>
<div class="a status"><svg class="a" style="left:0;top:0" width="1920" height="33"><rect width="1920" height="33" fill="#161616"/><rect x="162" y="20.4" width="334" height="1.5" fill="#000" opacity="0.54"/><rect x="1116" y="30.6" width="402" height="2" fill="#4c4c4c" opacity="0.48"/><rect x="1631" y="24.4" width="294" height="1.5" fill="#4c4c4c" opacity="0.16"/><rect x="512" y="14.8" width="478" height="1" fill="#4c4c4c" opacity="0.26"/><rect x="374" y="13.6" width="730" height="2" fill="#4c4c4c" opacity="0.32"/><rect x="1205" y="21.8" width="528" height="1" fill="#000" opacity="0.52"/><rect x="358" y="24.5" width="693" height="2" fill="#000" opacity="0.40"/><rect x="1151" y="14.4" width="319" height="1.5" fill="#000" opacity="0.35"/><rect x="569" y="18.6" width="780" height="1" fill="#4c4c4c" opacity="0.30"/><rect x="190" y="20.2" width="449" height="2" fill="#000" opacity="0.20"/><rect x="994" y="2.0" width="766" height="1.5" fill="#000" opacity="0.29"/><rect x="985" y="24.6" width="339" height="1" fill="#000" opacity="0.36"/><rect x="3" y="32.6" width="735" height="1" fill="#4c4c4c" opacity="0.43"/><rect x="959" y="9.1" width="546" height="2" fill="#4c4c4c" opacity="0.19"/><rect x="342" y="21.9" width="755" height="1" fill="#4c4c4c" opacity="0.18"/><rect x="876" y="15.2" width="893" height="1.5" fill="#4c4c4c" opacity="0.53"/><rect x="-185" y="14.3" width="157" height="1.5" fill="#4c4c4c" opacity="0.19"/><rect x="544" y="27.3" width="355" height="1" fill="#4c4c4c" opacity="0.35"/><rect x="583" y="17.8" width="453" height="1" fill="#000" opacity="0.39"/><rect x="-244" y="6.8" width="833" height="1" fill="#000" opacity="0.13"/><rect x="786" y="8.7" width="672" height="1.5" fill="#4c4c4c" opacity="0.47"/><rect x="1262" y="7.0" width="674" height="1" fill="#4c4c4c" opacity="0.50"/><rect x="1257" y="27.9" width="171" height="1.5" fill="#000" opacity="0.46"/><rect x="1891" y="20.1" width="318" height="1" fill="#4c4c4c" opacity="0.39"/><rect x="1746" y="21.4" width="741" height="1" fill="#000" opacity="0.20"/><rect x="1203" y="30.2" width="279" height="1" fill="#4c4c4c" opacity="0.42"/><rect x="407" y="25.4" width="791" height="2" fill="#4c4c4c" opacity="0.15"/><rect x="-195" y="23.7" width="672" height="1" fill="#4c4c4c" opacity="0.48"/><rect x="-202" y="3.1" width="415" height="2" fill="#000" opacity="0.38"/><rect x="-74" y="2.1" width="166" height="1.5" fill="#000" opacity="0.20"/><rect x="39" y="1.4" width="659" height="1" fill="#4c4c4c" opacity="0.46"/><rect x="490" y="18.5" width="420" height="1.5" fill="#4c4c4c" opacity="0.25"/><rect x="509" y="0.5" width="462" height="1" fill="#4c4c4c" opacity="0.19"/><rect x="741" y="27.9" width="534" height="2" fill="#4c4c4c" opacity="0.50"/><rect x="811" y="22.8" width="460" height="2" fill="#4c4c4c" opacity="0.34"/><rect x="977" y="14.7" width="898" height="1.5" fill="#000" opacity="0.48"/><rect x="368" y="0.7" width="174" height="1.5" fill="#000" opacity="0.39"/><rect x="516" y="17.2" width="842" height="1.5" fill="#4c4c4c" opacity="0.32"/><rect x="709" y="24.6" width="448" height="1" fill="#4c4c4c" opacity="0.50"/><rect x="248" y="2.5" width="878" height="1.5" fill="#4c4c4c" opacity="0.34"/><rect x="342" y="1.3" width="418" height="1" fill="#000" opacity="0.35"/><rect x="29" y="0.4" width="442" height="2" fill="#000" opacity="0.17"/><rect x="914" y="19.5" width="192" height="1" fill="#000" opacity="0.15"/><rect x="181" y="22.2" width="485" height="1" fill="#4c4c4c" opacity="0.26"/><rect x="1302" y="0.4" width="843" height="1.5" fill="#000" opacity="0.22"/><rect x="1826" y="11.0" width="569" height="1.5" fill="#4c4c4c" opacity="0.39"/><rect x="1468" y="6.2" width="318" height="1" fill="#4c4c4c" opacity="0.27"/><rect x="1108" y="26.1" width="705" height="1.5" fill="#000" opacity="0.40"/><rect x="1701" y="26.6" width="706" height="1" fill="#4c4c4c" opacity="0.17"/><rect x="-203" y="30.9" width="572" height="1.5" fill="#4c4c4c" opacity="0.47"/><rect x="1138" y="12.8" width="462" height="1.5" fill="#000" opacity="0.14"/><rect x="144" y="8.9" width="212" height="2" fill="#4c4c4c" opacity="0.42"/><rect x="1575" y="9.6" width="675" height="2" fill="#000" opacity="0.41"/><rect x="410" y="30.9" width="155" height="1" fill="#4c4c4c" opacity="0.37"/><rect x="-192" y="17.5" width="171" height="1.5" fill="#000" opacity="0.28"/><rect x="1793" y="12.8" width="633" height="1" fill="#000" opacity="0.21"/><rect x="1400" y="16.5" width="574" height="1" fill="#4c4c4c" opacity="0.20"/><rect x="1620" y="2.6" width="175" height="2" fill="#4c4c4c" opacity="0.32"/><rect x="1356" y="20.4" width="721" height="1" fill="#000" opacity="0.14"/><rect x="60" y="4.9" width="178" height="2" fill="#4c4c4c" opacity="0.50"/><rect x="1283" y="4.8" width="254" height="1" fill="#4c4c4c" opacity="0.55"/><rect x="211" y="19.6" width="285" height="1" fill="#4c4c4c" opacity="0.31"/><rect x="73" y="21.1" width="276" height="1" fill="#4c4c4c" opacity="0.28"/><rect x="1358" y="12.5" width="222" height="1" fill="#4c4c4c" opacity="0.25"/><rect x="445" y="6.4" width="157" height="2" fill="#000" opacity="0.37"/><rect x="335" y="9.6" width="649" height="1.5" fill="#4c4c4c" opacity="0.46"/><rect x="-61" y="30.5" width="640" height="1" fill="#4c4c4c" opacity="0.25"/><rect x="1441" y="24.8" width="675" height="2" fill="#000" opacity="0.20"/><rect x="459" y="28.5" width="339" height="2" fill="#4c4c4c" opacity="0.17"/><rect x="504" y="28.6" width="604" height="1.5" fill="#000" opacity="0.51"/><rect x="1563" y="33.0" width="642" height="2" fill="#000" opacity="0.18"/><rect x="-100" y="16.4" width="733" height="1.5" fill="#000" opacity="0.31"/><rect x="1821" y="6.9" width="442" height="1" fill="#4c4c4c" opacity="0.41"/><rect x="512" y="8.7" width="670" height="1" fill="#4c4c4c" opacity="0.49"/><rect x="1049" y="12.6" width="700" height="1.5" fill="#4c4c4c" opacity="0.42"/><rect x="741" y="21.2" width="530" height="1" fill="#4c4c4c" opacity="0.31"/><rect x="95" y="26.4" width="497" height="1.5" fill="#4c4c4c" opacity="0.41"/><rect x="582" y="10.5" width="385" height="1" fill="#000" opacity="0.32"/><rect x="1155" y="30.2" width="869" height="1" fill="#4c4c4c" opacity="0.38"/><rect x="1575" y="13.9" width="559" height="1.5" fill="#4c4c4c" opacity="0.41"/><rect x="-171" y="31.9" width="224" height="1.5" fill="#4c4c4c" opacity="0.32"/><rect x="916" y="22.6" width="792" height="1" fill="#4c4c4c" opacity="0.17"/><rect x="-76" y="15.7" width="590" height="1.5" fill="#000" opacity="0.19"/><rect x="1040" y="4.2" width="768" height="1.5" fill="#4c4c4c" opacity="0.17"/><rect x="930" y="29.2" width="587" height="1.5" fill="#000" opacity="0.41"/><rect x="1419" y="9.5" width="625" height="2" fill="#4c4c4c" opacity="0.12"/><rect x="770" y="28.1" width="832" height="1" fill="#4c4c4c" opacity="0.23"/><rect x="511" y="11.9" width="223" height="1" fill="#000" opacity="0.43"/><rect x="823" y="15.0" width="753" height="2" fill="#4c4c4c" opacity="0.52"/><rect x="1214" y="30.7" width="791" height="2" fill="#4c4c4c" opacity="0.17"/><rect x="1836" y="17.6" width="865" height="1" fill="#4c4c4c" opacity="0.36"/><rect x="1395" y="19.9" width="483" height="1" fill="#4c4c4c" opacity="0.28"/><rect x="-293" y="24.0" width="277" height="1" fill="#4c4c4c" opacity="0.19"/><rect x="1363" y="29.4" width="198" height="2" fill="#000" opacity="0.21"/><rect x="1878" y="6.0" width="361" height="2" fill="#4c4c4c" opacity="0.42"/><rect x="-58" y="25.7" width="178" height="1" fill="#000" opacity="0.32"/><rect x="1723" y="27.3" width="284" height="2" fill="#4c4c4c" opacity="0.25"/><rect x="1128" y="6.9" width="205" height="1" fill="#000" opacity="0.53"/><rect x="1307" y="10.6" width="828" height="1" fill="#000" opacity="0.14"/><rect x="913" y="4.6" width="863" height="1.5" fill="#000" opacity="0.23"/><rect x="1021" y="28.9" width="347" height="1" fill="#4c4c4c" opacity="0.41"/><rect x="-38" y="15.3" width="222" height="2" fill="#4c4c4c" opacity="0.48"/><rect x="779" y="27.9" width="299" height="1" fill="#4c4c4c" opacity="0.22"/><rect x="1260" y="4.2" width="598" height="2" fill="#000" opacity="0.45"/><rect x="1139" y="13.4" width="431" height="1.5" fill="#4c4c4c" opacity="0.28"/><rect x="481" y="11.6" width="785" height="1.5" fill="#000" opacity="0.41"/><rect x="1127" y="12.7" width="338" height="1" fill="#4c4c4c" opacity="0.16"/><rect x="372" y="30.4" width="434" height="1" fill="#4c4c4c" opacity="0.18"/><rect x="1426" y="17.6" width="517" height="2" fill="#4c4c4c" opacity="0.15"/><rect x="1477" y="31.1" width="849" height="2" fill="#000" opacity="0.25"/><rect x="1118" y="1.0" width="752" height="1" fill="#4c4c4c" opacity="0.20"/><rect x="-116" y="13.8" width="712" height="2" fill="#4c4c4c" opacity="0.22"/><rect x="409" y="19.8" width="176" height="1" fill="#4c4c4c" opacity="0.27"/><rect x="1748" y="11.9" width="801" height="1" fill="#4c4c4c" opacity="0.17"/><rect x="1157" y="5.8" width="528" height="1.5" fill="#4c4c4c" opacity="0.39"/><rect x="983" y="32.7" width="823" height="1" fill="#000" opacity="0.45"/><rect x="1427" y="15.6" width="652" height="2" fill="#4c4c4c" opacity="0.35"/><rect x="1354" y="26.6" width="822" height="2" fill="#000" opacity="0.47"/><rect x="22" y="3.0" width="185" height="1.5" fill="#4c4c4c" opacity="0.53"/><rect x="11" y="3.8" width="277" height="1.5" fill="#4c4c4c" opacity="0.39"/><rect x="442" y="3.4" width="464" height="1" fill="#4c4c4c" opacity="0.28"/><rect x="293" y="2.3" width="727" height="2" fill="#4c4c4c" opacity="0.41"/><rect x="1153" y="10.8" width="471" height="2" fill="#4c4c4c" opacity="0.15"/><rect x="5" y="3.5" width="298" height="1" fill="#4c4c4c" opacity="0.37"/><rect x="174" y="31.7" width="638" height="2" fill="#000" opacity="0.32"/><rect x="1378" y="5.9" width="763" height="1" fill="#000" opacity="0.21"/><rect x="649" y="12.1" width="833" height="1" fill="#4c4c4c" opacity="0.12"/><rect x="-98" y="30.0" width="364" height="1.5" fill="#000" opacity="0.35"/><rect x="714" y="14.4" width="501" height="1.5" fill="#4c4c4c" opacity="0.32"/><rect x="1249" y="32.1" width="266" height="1" fill="#4c4c4c" opacity="0.36"/><rect x="1687" y="18.2" width="651" height="1" fill="#4c4c4c" opacity="0.27"/><rect x="518" y="10.5" width="383" height="2" fill="#4c4c4c" opacity="0.37"/><rect x="109" y="11.1" width="406" height="1" fill="#4c4c4c" opacity="0.45"/><rect x="1456" y="23.9" width="213" height="1" fill="#4c4c4c" opacity="0.26"/><rect x="372" y="24.3" width="489" height="1.5" fill="#4c4c4c" opacity="0.32"/><rect x="-158" y="30.8" width="373" height="1" fill="#4c4c4c" opacity="0.35"/><rect x="1901" y="5.6" width="300" height="1.5" fill="#000" opacity="0.17"/><rect x="-133" y="29.8" width="590" height="2" fill="#4c4c4c" opacity="0.16"/><rect x="832" y="28.6" width="188" height="2" fill="#4c4c4c" opacity="0.25"/><rect x="-129" y="13.2" width="792" height="2" fill="#4c4c4c" opacity="0.30"/><rect x="456" y="24.1" width="321" height="2" fill="#4c4c4c" opacity="0.14"/><rect x="348" y="8.9" width="844" height="2" fill="#4c4c4c" opacity="0.28"/><rect x="445" y="22.3" width="519" height="1" fill="#4c4c4c" opacity="0.24"/><rect x="1383" y="0.2" width="268" height="1" fill="#4c4c4c" opacity="0.47"/><rect x="-237" y="24.2" width="156" height="2" fill="#4c4c4c" opacity="0.19"/><rect x="1443" y="3.3" width="567" height="1.5" fill="#4c4c4c" opacity="0.27"/><rect x="1459" y="16.6" width="777" height="1.5" fill="#000" opacity="0.43"/><rect x="884" y="15.2" width="584" height="1" fill="#4c4c4c" opacity="0.47"/><rect x="1535" y="27.5" width="553" height="2" fill="#4c4c4c" opacity="0.50"/><rect x="-284" y="4.4" width="586" height="2" fill="#000" opacity="0.24"/><rect x="1107" y="3.7" width="765" height="2" fill="#4c4c4c" opacity="0.26"/><rect x="1426" y="29.0" width="356" height="1" fill="#4c4c4c" opacity="0.43"/><rect x="1255" y="19.4" width="208" height="1" fill="#4c4c4c" opacity="0.23"/><rect x="1665" y="3.4" width="851" height="1.5" fill="#4c4c4c" opacity="0.31"/><rect x="813" y="18.2" width="287" height="2" fill="#4c4c4c" opacity="0.34"/><rect x="391" y="4.4" width="164" height="1" fill="#000" opacity="0.49"/><rect x="140" y="23.4" width="835" height="1.5" fill="#4c4c4c" opacity="0.42"/><rect x="-257" y="10.3" width="218" height="1" fill="#4c4c4c" opacity="0.43"/><rect x="-79" y="21.7" width="239" height="1" fill="#4c4c4c" opacity="0.50"/><rect x="317" y="14.7" width="830" height="1.5" fill="#4c4c4c" opacity="0.18"/><rect x="831" y="25.3" width="353" height="1.5" fill="#4c4c4c" opacity="0.40"/><rect x="3" y="24.5" width="343" height="1" fill="#000" opacity="0.19"/><rect x="1754" y="31.4" width="781" height="1" fill="#000" opacity="0.47"/><rect x="1775" y="29.1" width="708" height="2" fill="#4c4c4c" opacity="0.29"/><rect x="999" y="1.6" width="665" height="1.5" fill="#000" opacity="0.21"/><rect x="516" y="22.9" width="630" height="2" fill="#4c4c4c" opacity="0.51"/><rect x="155" y="15.3" width="488" height="1" fill="#000" opacity="0.36"/><rect x="1891" y="5.2" width="839" height="2" fill="#000" opacity="0.18"/><rect x="1012" y="27.1" width="250" height="1" fill="#000" opacity="0.41"/><rect x="1062" y="24.1" width="416" height="1" fill="#4c4c4c" opacity="0.15"/><rect x="920" y="28.0" width="189" height="1" fill="#4c4c4c" opacity="0.33"/><rect x="1504" y="31.7" width="893" height="1" fill="#4c4c4c" opacity="0.13"/><rect x="1059" y="28.5" width="423" height="2" fill="#4c4c4c" opacity="0.48"/><rect x="1017" y="32.5" width="790" height="2" fill="#000" opacity="0.55"/><rect x="1108" y="29.7" width="681" height="1" fill="#4c4c4c" opacity="0.51"/><rect x="577" y="32.7" width="356" height="1.5" fill="#000" opacity="0.16"/><rect x="1352" y="24.6" width="219" height="1" fill="#4c4c4c" opacity="0.27"/><rect x="1870" y="11.2" width="297" height="1" fill="#4c4c4c" opacity="0.22"/><rect x="625" y="17.3" width="666" height="1.5" fill="#4c4c4c" opacity="0.49"/><rect x="494" y="23.0" width="456" height="1" fill="#000" opacity="0.53"/><rect x="1345" y="28.6" width="191" height="1" fill="#4c4c4c" opacity="0.44"/><rect x="-59" y="27.3" width="479" height="1.5" fill="#4c4c4c" opacity="0.28"/><rect x="297" y="16.8" width="886" height="1" fill="#4c4c4c" opacity="0.15"/><rect x="184" y="8.6" width="377" height="1" fill="#000" opacity="0.26"/><rect x="1746" y="29.3" width="340" height="1" fill="#000" opacity="0.16"/><rect x="838" y="15.9" width="666" height="1" fill="#4c4c4c" opacity="0.43"/><rect x="-9" y="27.2" width="784" height="2" fill="#000" opacity="0.44"/><rect x="696" y="16.3" width="352" height="2" fill="#000" opacity="0.12"/><rect x="-41" y="22.4" width="691" height="1" fill="#000" opacity="0.26"/><rect x="867" y="13.6" width="357" height="1.5" fill="#4c4c4c" opacity="0.50"/><rect x="579" y="2.8" width="304" height="1" fill="#000" opacity="0.16"/><rect x="1880" y="24.8" width="592" height="1" fill="#4c4c4c" opacity="0.19"/><rect x="442" y="23.3" width="442" height="1" fill="#000" opacity="0.24"/><rect x="27" y="7.3" width="171" height="1.5" fill="#4c4c4c" opacity="0.30"/><rect x="1655" y="18.1" width="380" height="2" fill="#4c4c4c" opacity="0.31"/><rect x="1053" y="1.0" width="806" height="1" fill="#4c4c4c" opacity="0.42"/><rect x="1589" y="10.6" width="756" height="2" fill="#4c4c4c" opacity="0.25"/><rect x="1750" y="30.2" width="556" height="1" fill="#4c4c4c" opacity="0.28"/><rect x="356" y="2.2" width="182" height="1" fill="#000" opacity="0.27"/><rect x="-197" y="28.6" width="861" height="1" fill="#4c4c4c" opacity="0.49"/><rect x="886" y="3.2" width="192" height="1.5" fill="#4c4c4c" opacity="0.47"/><rect x="-23" y="14.5" width="582" height="2" fill="#000" opacity="0.23"/><rect x="1287" y="17.7" width="861" height="1" fill="#000" opacity="0.22"/><rect x="1587" y="4.1" width="318" height="1.5" fill="#000" opacity="0.34"/><rect x="-189" y="13.7" width="240" height="2" fill="#000" opacity="0.49"/><rect x="224" y="32.4" width="197" height="1" fill="#4c4c4c" opacity="0.36"/><rect x="745" y="8.0" width="410" height="2" fill="#000" opacity="0.48"/><rect x="1126" y="3.8" width="253" height="1" fill="#4c4c4c" opacity="0.38"/><rect x="702" y="19.3" width="450" height="1" fill="#4c4c4c" opacity="0.39"/><rect x="1495" y="22.5" width="516" height="1" fill="#000" opacity="0.48"/><rect x="147" y="10.5" width="484" height="1" fill="#4c4c4c" opacity="0.31"/><rect x="657" y="9.6" width="800" height="1.5" fill="#000" opacity="0.45"/><rect x="925" y="10.0" width="891" height="1" fill="#000" opacity="0.37"/><rect x="888" y="18.3" width="425" height="2" fill="#000" opacity="0.45"/><rect x="1341" y="27.0" width="790" height="1" fill="#4c4c4c" opacity="0.31"/><rect x="-29" y="31.3" width="616" height="1" fill="#000" opacity="0.41"/><rect x="829" y="4.5" width="641" height="1" fill="#4c4c4c" opacity="0.17"/><rect x="1625" y="20.1" width="565" height="1" fill="#4c4c4c" opacity="0.24"/><rect x="471" y="0.7" width="222" height="1" fill="#000" opacity="0.18"/><rect x="-197" y="8.6" width="569" height="1" fill="#4c4c4c" opacity="0.52"/><rect x="171" y="15.5" width="459" height="2" fill="#4c4c4c" opacity="0.48"/><rect x="-266" y="5.1" width="582" height="1.5" fill="#4c4c4c" opacity="0.38"/><rect x="947" y="24.0" width="347" height="1" fill="#4c4c4c" opacity="0.44"/><rect x="467" y="29.4" width="866" height="1" fill="#4c4c4c" opacity="0.23"/><rect x="-48" y="10.2" width="180" height="1" fill="#000" opacity="0.22"/><rect x="1192" y="6.3" width="822" height="1" fill="#4c4c4c" opacity="0.20"/><rect x="1553" y="27.3" width="885" height="1" fill="#000" opacity="0.52"/><rect x="419" y="19.2" width="434" height="2" fill="#4c4c4c" opacity="0.23"/><rect x="1299" y="28.5" width="319" height="2" fill="#4c4c4c" opacity="0.28"/><rect x="1488" y="4.5" width="371" height="1" fill="#000" opacity="0.47"/><rect x="938" y="22.4" width="565" height="2" fill="#4c4c4c" opacity="0.17"/><rect x="-64" y="10.3" width="852" height="2" fill="#4c4c4c" opacity="0.29"/><rect x="1824" y="15.5" width="609" height="1" fill="#000" opacity="0.41"/><rect x="1168" y="0.2" width="284" height="2" fill="#000" opacity="0.37"/><rect x="13" y="15.5" width="530" height="1.5" fill="#4c4c4c" opacity="0.35"/><rect x="1000" y="24.2" width="881" height="1" fill="#000" opacity="0.36"/><rect x="527" y="9.5" width="474" height="1" fill="#000" opacity="0.43"/><rect x="25" y="11.8" width="528" height="1" fill="#4c4c4c" opacity="0.27"/><rect x="-107" y="12.7" width="163" height="1" fill="#4c4c4c" opacity="0.43"/><rect x="668" y="25.8" width="707" height="1.5" fill="#000" opacity="0.39"/><rect x="943" y="22.0" width="218" height="2" fill="#000" opacity="0.42"/><rect x="1314" y="15.8" width="708" height="1.5" fill="#4c4c4c" opacity="0.39"/><rect x="1673" y="5.5" width="283" height="1" fill="#000" opacity="0.19"/><rect x="-103" y="32.9" width="794" height="2" fill="#4c4c4c" opacity="0.54"/><rect x="1443" y="2.6" width="879" height="1.5" fill="#000" opacity="0.28"/><rect x="-47" y="28.7" width="554" height="2" fill="#4c4c4c" opacity="0.36"/><rect x="1819" y="10.7" width="599" height="1" fill="#4c4c4c" opacity="0.36"/><rect x="228" y="30.3" width="408" height="1" fill="#4c4c4c" opacity="0.31"/><rect x="637" y="14.4" width="601" height="2" fill="#4c4c4c" opacity="0.39"/><rect x="1772" y="21.0" width="283" height="1.5" fill="#000" opacity="0.41"/><rect x="664" y="11.9" width="890" height="1.5" fill="#4c4c4c" opacity="0.55"/><rect x="1917" y="12.6" width="445" height="2" fill="#4c4c4c" opacity="0.18"/><rect x="1809" y="18.5" width="707" height="1" fill="#4c4c4c" opacity="0.54"/><rect x="1640" y="17.4" width="831" height="2" fill="#000" opacity="0.46"/><rect x="724" y="3.5" width="872" height="2" fill="#4c4c4c" opacity="0.41"/><rect x="790" y="10.4" width="876" height="1" fill="#000" opacity="0.49"/><rect x="1195" y="30.0" width="330" height="1" fill="#4c4c4c" opacity="0.33"/><rect x="649" y="13.7" width="318" height="2" fill="#4c4c4c" opacity="0.44"/><rect x="1004" y="9.0" width="219" height="2" fill="#4c4c4c" opacity="0.20"/><rect x="205" y="22.7" width="667" height="1" fill="#4c4c4c" opacity="0.44"/></svg></div>

<!-- splitter & right panel -->
<div class="a" style="left:1386px;top:158px;width:6px;height:842px;background:#cdcdcd;border-left:1px solid #bdbdbd;border-right:1px solid #bdbdbd"></div>
<div class="a" style="left:1392px;top:158px;width:528px;height:25px;background:#f26e21"></div>
<div class="t" style="left:1402px;top:164.5px;font-size:11.6px;font-weight:bold;color:#fff">GRD3</div>
<div class="t" style="left:1445px;top:164.5px;font-size:12.4px;color:#fff">[Bolt/Anchor grid or Contact]</div>
<div class="t" style="left:1783px;top:164.5px;font-size:12px;font-weight:bold;color:#fff">Editor</div>
<div class="t" style="left:1835.5px;top:164.5px;font-size:12px;font-weight:bold;color:#fff">Copy</div>
<div class="t" style="left:1873.5px;top:164.5px;font-size:12.5px;font-weight:bold;color:#fff">Delete</div>
<svg class="a" style="left:1392px;top:183px" width="528" height="360" viewBox="1392 183 528 360">
<path d="M1399,194.4 H1409.5 L1404.2,201.4 Z M1399,323.7 H1409.5 L1404.2,330.8 Z" fill="#f26e21"/>
</svg>
<div class="t" style="left:1426.4px;top:191px;font-size:14.1px;font-weight:bold;color:#f26e21">Bolt/Anchor grid or Contact</div>
<div class="t" style="left:1426.4px;top:321px;font-size:13.2px;font-weight:bold;color:#f26e21">Fasteners</div>
<div class="t" style="left:1426.4px;top:218.0px;font-size:11.6px;color:#1a1a1a">Fastener</div>
<div class="a" style="left:1548px;top:213.2px;width:371px;height:21.4px;background:#e3e3e3"></div>
<div class="t" style="left:1554.4px;top:218.4px;font-size:12px;color:#1a1a1a">Bolts</div>
<svg class="a" style="left:1905.9px;top:220.9px" width="9" height="6"><path d="M0,0 H8.4 L4.2,5.6 Z" fill="#111"/></svg>
<div class="t" style="left:1426.4px;top:242.3px;font-size:11.6px;color:#1a1a1a">Items count</div>
<div class="a" style="left:1547.3px;top:237.4px;width:371.7px;height:21.6px;background:#f0f0f0"></div>
<div class="t" style="left:1552px;top:242.7px;font-size:12px;color:#1a1a1a">2</div>
<div class="t" style="left:1426.4px;top:267.1px;font-size:11.6px;color:#1a1a1a">Item 1</div>
<div class="a" style="left:1548px;top:261.1px;width:297px;height:23.8px;background:#e3e3e3"></div>
<div class="t" style="left:1554.4px;top:267.5px;font-size:12px;color:#1a1a1a">SM1 | Web 1</div>
<svg class="a" style="left:1831.0px;top:270.0px" width="9" height="6"><path d="M0,0 H8.4 L4.2,5.6 Z" fill="#111"/></svg>
<div class="t" style="left:1426.4px;top:293.1px;font-size:11.6px;color:#1a1a1a">Item 2</div>
<div class="a" style="left:1548px;top:287.3px;width:297px;height:23.4px;background:#e3e3e3"></div>
<div class="t" style="left:1554.4px;top:293.5px;font-size:12px;color:#1a1a1a">AM1 | Web 2</div>
<svg class="a" style="left:1831.0px;top:296.0px" width="9" height="6"><path d="M0,0 H8.4 L4.2,5.6 Z" fill="#111"/></svg>
<div class="t" style="left:1426.4px;top:347.0px;font-size:11.6px;color:#1a1a1a">Type</div>
<div class="a" style="left:1548px;top:342px;width:346px;height:21.7px;background:#e3e3e3"></div>
<div class="t" style="left:1554.4px;top:347.4px;font-size:12px;color:#1a1a1a">M16 5.6</div>
<svg class="a" style="left:1880.0px;top:349.9px" width="9" height="6"><path d="M0,0 H8.4 L4.2,5.6 Z" fill="#111"/></svg>
<div class="t" style="left:1426.4px;top:371.1px;font-size:11.6px;color:#1a1a1a">Coord. system</div>
<div class="a" style="left:1548px;top:366px;width:371px;height:21.9px;background:#e3e3e3"></div>
<div class="t" style="left:1554.4px;top:371.4px;font-size:12px;color:#1a1a1a">Orthogonal</div>
<svg class="a" style="left:1905.9px;top:373.9px" width="9" height="6"><path d="M0,0 H8.4 L4.2,5.6 Z" fill="#111"/></svg>
<div class="t" style="left:1426.4px;top:395.1px;font-size:11.6px;color:#1a1a1a">Origin [mm]</div>
<div class="a" style="left:1547.3px;top:390.4px;width:371.7px;height:21.1px;background:#f0f0f0"></div>
<div class="t" style="left:1552px;top:395.4px;font-size:12px;color:#1a1a1a">0 0</div>
<div class="t" style="left:1426.4px;top:419.1px;font-size:11.6px;color:#1a1a1a">Rows [mm]</div>
<div class="a" style="left:1547.3px;top:414.3px;width:371.7px;height:21.4px;background:#f0f0f0"></div>
<div class="t" style="left:1552px;top:419.5px;font-size:12px;color:#1a1a1a">25 -150</div>
<div class="t" style="left:1426.4px;top:443.0px;font-size:11.6px;color:#1a1a1a">Positions [mm]</div>
<div class="a" style="left:1547.3px;top:438.2px;width:371.7px;height:21.4px;background:#f0f0f0"></div>
<div class="t" style="left:1552px;top:443.4px;font-size:12px;color:#1a1a1a">-130</div>
<div class="t" style="left:1426.4px;top:466.9px;font-size:11.6px;color:#1a1a1a">Grid</div>
<div class="a" style="left:1548px;top:462.1px;width:371px;height:21.4px;background:#e3e3e3"></div>
<div class="t" style="left:1554.4px;top:467.3px;font-size:12px;color:#1a1a1a">Regular</div>
<svg class="a" style="left:1905.9px;top:469.8px" width="9" height="6"><path d="M0,0 H8.4 L4.2,5.6 Z" fill="#111"/></svg>
<div class="t" style="left:1426.4px;top:492.3px;font-size:11.6px;color:#1a1a1a">Shear plane in thread</div>
<div class="a" style="left:1553px;top:491px;width:11.2px;height:10.5px;background:#e6e6e6;border-radius:2px"></div>
<svg class="a" style="left:1552px;top:488px" width="16" height="14"><path d="M3,8 L6,11 L13.5,1.5" stroke="#f58220" stroke-width="2" fill="none"/></svg>
<div class="t" style="left:1426.4px;top:515.1px;font-size:11.6px;color:#1a1a1a">Shear force transfer</div>
<div class="a" style="left:1548px;top:510.2px;width:371px;height:21.7px;background:#e3e3e3"></div>
<div class="t" style="left:1554.4px;top:515.5px;font-size:12px;color:#1a1a1a">Bearing - tension/shear interaction</div>
<svg class="a" style="left:1905.9px;top:518.0px" width="9" height="6"><path d="M0,0 H8.4 L4.2,5.6 Z" fill="#111"/></svg>
<div class="a" style="left:1850px;top:263px;width:20px;height:20px;background:#f26e21"></div>
<svg class="a" style="left:1850px;top:263px" width="20" height="20"><path d="M3,5 H17 M3,13.5 H17" stroke="#333" stroke-width="2.4"/><path d="M2,8.5 L3.5,9.5 L2,10.5 M18,8.5 L16.5,9.5 L18,10.5" stroke="#333" stroke-width="0.8" fill="none"/></svg>
<svg class="a" style="left:1879px;top:265.3px" width="13" height="16"><rect x="0.8" y="0.8" width="10.7" height="14.2" rx="1" stroke="#9a9a9a" stroke-width="1" fill="none"/><path d="M2.5,3 h2 M8,3 h2 M2.5,12.8 h2 M8,12.8 h2" stroke="#333" stroke-width="1.3"/></svg>
<div class="a" style="left:1897px;top:261.1px;width:22px;height:23.8px;background:#9a9a9a"></div>
<svg class="a" style="left:1897px;top:261.1px" width="22" height="24"><path d="M6.5,4.5 V17.5 L9.5,14.5 L12,19.5 L14,18.5 L11.5,13.8 H15.5 Z" fill="#fff"/></svg>
<div class="a" style="left:1850px;top:289.2px;width:20px;height:20px;background:#f26e21"></div>
<svg class="a" style="left:1850px;top:289.2px" width="20" height="20"><path d="M3,5 H17 M3,13.5 H17" stroke="#333" stroke-width="2.4"/><path d="M2,8.5 L3.5,9.5 L2,10.5 M18,8.5 L16.5,9.5 L18,10.5" stroke="#333" stroke-width="0.8" fill="none"/></svg>
<svg class="a" style="left:1879px;top:291.5px" width="13" height="16"><rect x="0.8" y="0.8" width="10.7" height="14.2" rx="1" stroke="#9a9a9a" stroke-width="1" fill="none"/><path d="M2.5,3 h2 M8,3 h2 M2.5,12.8 h2 M8,12.8 h2" stroke="#333" stroke-width="1.3"/></svg>
<div class="a" style="left:1897px;top:287.3px;width:22px;height:23.8px;background:#9a9a9a"></div>
<svg class="a" style="left:1897px;top:287.3px" width="22" height="24"><path d="M6.5,4.5 V17.5 L9.5,14.5 L12,19.5 L14,18.5 L11.5,13.8 H15.5 Z" fill="#fff"/></svg>
<div class="a" style="left:1897px;top:342px;width:22px;height:21.7px;background:#9a9a9a"></div>
<svg class="a" style="left:1897px;top:342px" width="22" height="22"><path d="M11,3 V19 M3,11 H19" stroke="#fff" stroke-width="3.6"/></svg>

<div class="t" style="left:23px;top:1011.5px;font-size:12.2px;color:#989898">Design code:</div>
<div class="t" style="left:99px;top:1011.5px;font-size:12px;font-weight:bold;color:#fff">EN</div>
<div class="t" style="left:134px;top:1011.5px;font-size:12.2px;color:#989898">Analysis:</div>
<div class="t" style="left:185px;top:1011.5px;font-size:11.2px;font-weight:bold;color:#fff">Stress, strain</div>
<div class="t" style="left:276px;top:1011.5px;font-size:12.2px;color:#989898">Load effects:</div>
<div class="t" style="left:353px;top:1011.5px;font-size:11.6px;font-weight:bold;color:#fff">In equilibrium</div>
<div class="t" style="left:450px;top:1011.5px;font-size:12.2px;color:#989898">Units:</div>
<div class="t" style="left:490px;top:1011.5px;font-size:12px;font-weight:bold;color:#fff">mm</div>
<div class="t" style="left:1797px;top:1011.5px;font-size:12px;color:#fff"><span style="color:#f26e21">www.</span>ideastatica<span style="color:#f26e21">.com</span></div>
</body></html>
